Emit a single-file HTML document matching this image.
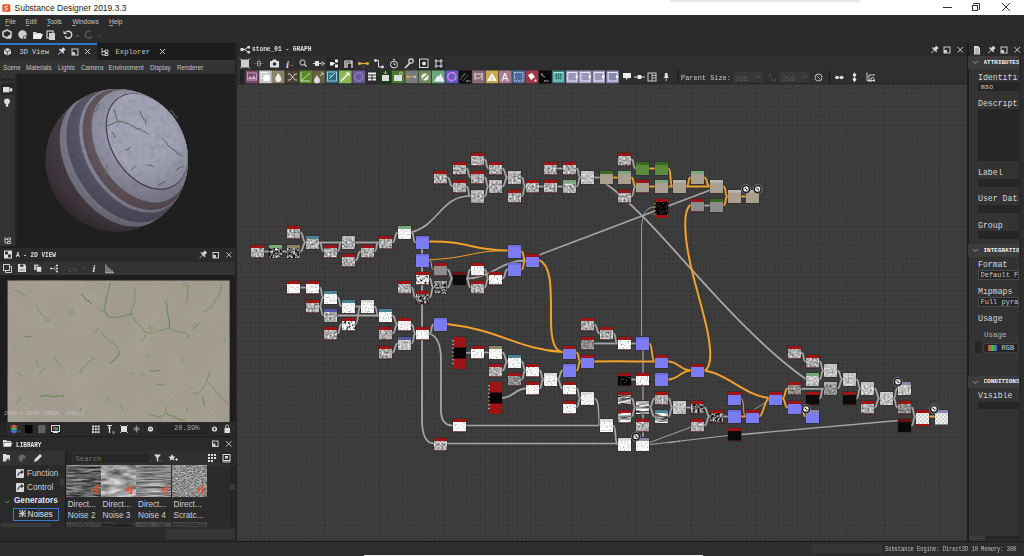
<!DOCTYPE html><html><head><meta charset="utf-8"><style>
html,body{margin:0;padding:0;width:1024px;height:556px;overflow:hidden;background:#2b2b2b;position:relative}
div{box-sizing:border-box}
svg{position:absolute;overflow:hidden}
</style></head><body>
<div style="position:absolute;left:0px;top:0px;width:1024px;height:15px;background:#ffffff;"></div>
<svg style="left:0;top:0" width="14" height="15"><path d="M6.3 2.5v11M1 8h11" stroke="#f4b8a0" stroke-width="0.5"/><rect x="2.3" y="4.3" width="8" height="7.4" rx="1.3" fill="#e8562c"/><path d="M7.8 6.3h-2.3a1 1 0 0 0 0 1.7h1.5a1 1 0 0 1 0 1.7h-2.3" stroke="#fff" stroke-width="0.9" fill="none"/></svg>
<div style="position:absolute;left:14.5px;top:3.6px;font-family:'Liberation Sans', sans-serif;font-size:8.5px;line-height:1;color:#1a1a1a;white-space:nowrap;">Substance Designer 2019.3.3</div>
<div style="position:absolute;left:943px;top:7px;width:9px;height:1px;background:#333;"></div>
<div style="position:absolute;left:971.6px;top:4.5px;width:6px;height:6px;border:1px solid #333"></div>
<svg style="left:971px;top:2px" width="10" height="10"><path d="M2.5 2.5V1.5h6v6H7.5" stroke="#333" stroke-width="1" fill="none"/></svg>
<svg style="left:1001px;top:2px" width="10" height="10"><path d="M1 1L9 9M9 1L1 9" stroke="#333" stroke-width="1"/></svg>
<div style="position:absolute;left:670px;top:0px;width:190px;height:1.5px;background:#e6e6e6;"></div>
<div style="position:absolute;left:0px;top:15px;width:1024px;height:28px;background:#2b2b2b;"></div>
<div style="position:absolute;left:5.3px;top:18.5px;font-family:'Liberation Sans', sans-serif;font-size:6.5px;line-height:1;color:#c8c8c8;white-space:nowrap;">File</div>
<div style="position:absolute;left:5.3px;top:25.3px;width:3.5px;height:0.6px;background:#999;"></div>
<div style="position:absolute;left:25.5px;top:18.5px;font-family:'Liberation Sans', sans-serif;font-size:6.5px;line-height:1;color:#c8c8c8;white-space:nowrap;">Edit</div>
<div style="position:absolute;left:25.5px;top:25.3px;width:3.5px;height:0.6px;background:#999;"></div>
<div style="position:absolute;left:46.7px;top:18.5px;font-family:'Liberation Sans', sans-serif;font-size:6.5px;line-height:1;color:#c8c8c8;white-space:nowrap;">Tools</div>
<div style="position:absolute;left:46.7px;top:25.3px;width:3.5px;height:0.6px;background:#999;"></div>
<div style="position:absolute;left:72.4px;top:18.5px;font-family:'Liberation Sans', sans-serif;font-size:6.5px;line-height:1;color:#c8c8c8;white-space:nowrap;">Windows</div>
<div style="position:absolute;left:72.4px;top:25.3px;width:3.5px;height:0.6px;background:#999;"></div>
<div style="position:absolute;left:109px;top:18.5px;font-family:'Liberation Sans', sans-serif;font-size:6.5px;line-height:1;color:#c8c8c8;white-space:nowrap;">Help</div>
<div style="position:absolute;left:109px;top:25.3px;width:3.5px;height:0.6px;background:#999;"></div>
<svg style="left:0;top:27px" width="110" height="15">
<g fill="#d0d0d0">
<path d="M7 3l4 2v4l-4 2l-4-2V5z" fill="none" stroke="#d0d0d0" stroke-width="1.6"/><circle cx="9.5" cy="10" r="2" />
<circle cx="22.5" cy="7.5" r="4.2"/><circle cx="25" cy="10.5" r="2" fill="#2b2b2b"/><circle cx="25" cy="10.5" r="1.3"/>
<path d="M33 5h3l1 1h4v6h-8z"/><path d="M34 7h9l-2 5h-8z" fill="#eee"/>
<rect x="47" y="4" width="6" height="7" fill="none" stroke="#d0d0d0" stroke-width="1.2"/><rect x="49" y="6" width="6" height="7"/>
</g>
<path d="M66 5a3.5 3.5 0 1 1 -1 4" fill="none" stroke="#d0d0d0" stroke-width="1.5"/><path d="M63.5 3.5v3.5h3.5z" fill="#d0d0d0"/>
<path d="M76 8l1.5 1.5l1.5-1.5" fill="none" stroke="#888" stroke-width="0.8"/>
<path d="M91 5a3.5 3.5 0 1 0 1 4" fill="none" stroke="#555" stroke-width="1.5"/>
<path d="M98 8l1.5 1.5l1.5-1.5" fill="none" stroke="#555" stroke-width="0.8"/>
</svg>
<div style="position:absolute;left:0px;top:42.5px;width:235px;height:17.5px;background:#1c1c1c;"></div>
<div style="position:absolute;left:0px;top:42.5px;width:97px;height:17.5px;background:#2c2c2c;"></div>
<div style="position:absolute;left:0px;top:42.5px;width:97px;height:2px;background:#2a78c8;"></div>
<svg style="left:0;top:44px" width="236" height="16">
<path d="M7.5 4l3.5 1.8v4l-3.5 1.8l-3.5-1.8v-4z" fill="#cfcfcf"/><path d="M4 5.8l3.5 1.8l3.5-1.8M7.5 7.6v4" stroke="#2c2c2c" stroke-width="0.7" fill="none"/>
<g transform="translate(61.5 7.3) rotate(45)" fill="#d8d8d8"><rect x="-1.6" y="-4.2" width="3.2" height="3.6"/><rect x="-3" y="-0.8" width="6" height="1.4"/><rect x="-0.4" y="0.5" width="0.8" height="4.2" fill="#aaa"/></g>
<rect x="72" y="5" width="6" height="6" fill="none" stroke="#ccc" stroke-width="1"/><rect x="72" y="8" width="3" height="3" fill="#ccc"/>
<path d="M85 5l5 5M90 5l-5 5" stroke="#ccc" stroke-width="1"/>
<path d="M102 4v7h4M102 7.5h4M105 6h3v2.5h-3zM105 9.5h3v2h-3z" stroke="#ccc" stroke-width="0.9" fill="none"/>
<path d="M160 5l5 5M165 5l-5 5" stroke="#ccc" stroke-width="1"/>
</svg>
<div style="position:absolute;left:19.5px;top:49.3px;font-family:'Liberation Mono', monospace;font-size:7px;line-height:1;color:#d8d8d8;white-space:nowrap;">3D View</div>
<div style="position:absolute;left:115.5px;top:49px;font-family:'Liberation Mono', monospace;font-size:7.2px;line-height:1;color:#c8c8c8;white-space:nowrap;">Explorer</div>
<div style="position:absolute;left:0px;top:60px;width:235px;height:14px;background:#333333;"></div>
<div style="position:absolute;left:3px;top:64.5px;font-family:'Liberation Sans', sans-serif;font-size:6.3px;line-height:1;color:#c0c4cc;white-space:nowrap;">Scene</div>
<div style="position:absolute;left:26px;top:64.5px;font-family:'Liberation Sans', sans-serif;font-size:6.3px;line-height:1;color:#c0c4cc;white-space:nowrap;">Materials</div>
<div style="position:absolute;left:58px;top:64.5px;font-family:'Liberation Sans', sans-serif;font-size:6.3px;line-height:1;color:#c0c4cc;white-space:nowrap;">Lights</div>
<div style="position:absolute;left:81px;top:64.5px;font-family:'Liberation Sans', sans-serif;font-size:6.3px;line-height:1;color:#c0c4cc;white-space:nowrap;">Camera</div>
<div style="position:absolute;left:108.5px;top:64.5px;font-family:'Liberation Sans', sans-serif;font-size:6.3px;line-height:1;color:#c0c4cc;white-space:nowrap;">Environment</div>
<div style="position:absolute;left:150px;top:64.5px;font-family:'Liberation Sans', sans-serif;font-size:6.3px;line-height:1;color:#c0c4cc;white-space:nowrap;">Display</div>
<div style="position:absolute;left:177px;top:64.5px;font-family:'Liberation Sans', sans-serif;font-size:6.3px;line-height:1;color:#c0c4cc;white-space:nowrap;">Renderer</div>
<div style="position:absolute;left:0px;top:74px;width:235px;height:174px;background:#1f1f1f;"></div>
<div style="position:absolute;left:0px;top:74px;width:15.3px;height:172px;background:#333333;"></div>
<div style="position:absolute;left:15.3px;top:74px;width:1.6px;height:172px;background:#262626;"></div>
<div style="position:absolute;left:1px;top:78.3px;width:13px;height:2.5px;background:#262626;"></div>
<div style="position:absolute;left:1px;top:83.3px;width:13px;height:12.2px;background:#262626;"></div>
<svg style="left:0;top:74px" width="16" height="174">
<rect x="3" y="13" width="6.5" height="5.4" fill="#ddd"/><path d="M9.5 15l2.7-1.6v4.6l-2.7-1.4z" fill="#ddd"/>
<circle cx="7" cy="27.3" r="2.9" fill="#ddd"/><rect x="5.8" y="29.5" width="2.4" height="3.2" fill="#ddd"/>
<path d="M5 163v6h3M5 165.5h3M7.5 164h3v2h-3zM7.5 167.5h3v2h-3z" stroke="#ccc" stroke-width="0.9" fill="none"/>
</svg>
<svg style="left:15px;top:74px" width="221" height="174" viewBox="15 74 221 174">
<defs>
<radialGradient id="shade" cx="0.66" cy="0.28" r="0.8">
<stop offset="0" stop-color="#fff" stop-opacity="0.06"/><stop offset="0.3" stop-color="#000" stop-opacity="0"/><stop offset="0.6" stop-color="#000" stop-opacity="0.18"/><stop offset="0.85" stop-color="#000" stop-opacity="0.34"/><stop offset="1" stop-color="#000" stop-opacity="0.55"/></radialGradient>
<filter id="sblur"><feGaussianBlur stdDeviation="0.35"/></filter><filter id="stex" x="0" y="0" width="1" height="1" color-interpolation-filters="sRGB"><feTurbulence type="fractalNoise" baseFrequency="0.18" numOctaves="3" seed="12"/><feColorMatrix type="matrix" values="0 0 0 0 0.2 0 0 0 0 0.2 0 0 0 0 0.25 2 0 0 0 -0.9"/><feComposite in2="SourceGraphic" operator="in"/></filter>
</defs><g filter="url(#sblur)"><circle cx="116.8" cy="160.3" r="71.2" fill="#5c5058"/><path d="M152.3,222.0 151.2,222.6 150.1,223.2 148.9,223.7 147.7,224.2 146.5,224.6 145.3,225.0 144.0,225.4 142.8,225.7 141.5,226.0 140.2,226.2 138.8,226.4 137.5,226.5 136.1,226.6 134.8,226.6 133.4,226.6 132.0,226.6 130.6,226.5 129.2,226.3 127.8,226.1 126.3,225.9 124.9,225.6 123.5,225.3 122.0,225.0 120.6,224.6 119.1,224.1 117.6,223.6 116.2,223.1 114.7,222.5 113.2,221.9 111.8,221.2 110.3,220.5 108.9,219.8 107.4,219.0 106.0,218.2 104.5,217.3 103.1,216.4 101.7,215.5 100.3,214.5 98.9,213.5 97.5,212.4 96.1,211.4 94.8,210.2 93.4,209.1 92.1,207.9 90.8,206.7 89.5,205.4 88.2,204.2 86.9,202.8 85.7,201.5 84.4,200.1 83.2,198.8 82.1,197.3 80.9,195.9 79.8,194.4 78.7,192.9 77.6,191.4 76.5,189.9 75.5,188.3 74.5,186.8 73.5,185.2 72.6,183.6 71.7,182.0 70.8,180.3 69.9,178.7 69.1,177.0 68.3,175.3 67.5,173.7 66.8,172.0 66.1,170.3 65.5,168.6 64.8,166.9 64.3,165.2 63.7,163.4 63.2,161.7 62.7,160.0 62.3,158.3 61.8,156.6 61.5,154.9 61.1,153.2 60.8,151.5 60.6,149.8 60.3,148.1 60.2,146.4 60.0,144.7 59.9,143.1 59.8,141.4 59.8,139.8 59.8,138.2 59.9,136.6 59.9,135.0 60.1,133.4 60.2,131.9 60.4,130.3 60.6,128.8 60.9,127.3 61.2,125.9 61.6,124.4 62.0,123.0 62.4,121.6 62.8,120.3 63.3,119.0 63.9,117.7 64.4,116.4 65.0,115.1 65.6,113.9 66.3,112.7 67.0,111.6 67.8,110.5 68.5,109.4 69.3,108.4 70.2,107.4 71.0,106.4 71.9,105.5 72.8,104.6 73.8,103.7 74.8,102.9 75.8,102.1 76.8,101.4 83.5,97.4 94.2,92.8 105.4,90.0 117.0,89.1 128.6,90.1 139.9,92.9 150.6,97.6 160.3,103.9 168.9,111.8 176.1,120.9 181.7,131.1 185.6,142.0 187.7,153.5 187.8,165.1 186.1,176.6 182.5,187.7 177.2,198.0 170.3,207.3 161.9,215.4 152.3,222.0Z" fill="#9898ac"/><path d="M163.5,214.1 162.5,214.9 161.5,215.7 160.5,216.4 159.4,217.1 158.3,217.7 157.2,218.3 156.1,218.9 154.9,219.4 153.7,219.9 152.5,220.3 151.3,220.7 150.1,221.1 148.8,221.4 147.5,221.7 146.2,221.9 144.9,222.1 143.6,222.2 142.2,222.3 140.9,222.3 139.5,222.3 138.1,222.3 136.7,222.2 135.3,222.0 133.9,221.8 132.5,221.6 131.1,221.3 129.6,221.0 128.2,220.7 126.7,220.3 125.3,219.8 123.8,219.3 122.4,218.8 120.9,218.2 119.5,217.6 118.0,217.0 116.6,216.3 115.1,215.5 113.7,214.7 112.3,213.9 110.8,213.1 109.4,212.2 108.0,211.2 106.6,210.3 105.2,209.3 103.8,208.2 102.5,207.1 101.1,206.0 99.8,204.9 98.5,203.7 97.1,202.5 95.9,201.3 94.6,200.0 93.3,198.7 92.1,197.4 90.9,196.0 89.7,194.6 88.5,193.2 87.4,191.8 86.2,190.3 85.1,188.8 84.1,187.3 83.0,185.8 82.0,184.3 81.0,182.7 80.0,181.1 79.1,179.5 78.2,177.9 77.3,176.3 76.4,174.7 75.6,173.0 74.8,171.4 74.1,169.7 73.4,168.0 72.7,166.3 72.0,164.6 71.4,162.9 70.8,161.2 70.3,159.5 69.7,157.8 69.3,156.1 68.8,154.4 68.4,152.7 68.0,151.0 67.7,149.3 67.4,147.6 67.1,145.9 66.9,144.3 66.7,142.6 66.6,140.9 66.5,139.3 66.4,137.6 66.4,136.0 66.4,134.4 66.4,132.8 66.5,131.2 66.6,129.7 66.8,128.2 67.0,126.6 67.2,125.1 67.5,123.7 67.8,122.2 68.1,120.8 68.5,119.4 68.9,118.0 69.4,116.6 69.9,115.3 70.4,114.0 71.0,112.8 71.6,111.5 72.2,110.3 72.9,109.1 73.6,108.0 74.3,106.9 75.0,105.8 75.8,104.8 76.7,103.8 77.5,102.8 78.4,101.9 79.3,101.0 80.3,100.2 81.3,99.4 82.3,98.6 83.3,97.9 84.4,97.2 85.4,96.5 86.5,95.9 87.7,95.3 88.8,94.8 95.2,92.4 105.2,90.1 115.4,89.1 125.6,89.6 135.7,91.6 145.3,95.1 154.4,99.8 162.7,105.8 170.0,113.0 176.2,121.1 181.2,130.0 184.9,139.6 187.2,149.6 188.0,159.8 187.3,170.0 185.2,180.0 181.7,189.6 176.8,198.6 170.7,206.8 163.5,214.1Z" fill="#666278"/><path d="M178.2,196.3 177.6,197.4 176.9,198.4 176.1,199.4 175.4,200.4 174.6,201.4 173.8,202.3 173.0,203.2 172.1,204.0 171.2,204.8 170.3,205.6 169.3,206.3 168.3,207.0 167.3,207.6 166.3,208.3 165.3,208.8 164.2,209.4 163.1,209.9 162.0,210.3 160.8,210.7 159.7,211.1 158.5,211.4 157.3,211.7 156.1,212.0 154.9,212.2 153.6,212.4 152.4,212.5 151.1,212.6 149.8,212.6 148.5,212.6 147.2,212.5 145.9,212.5 144.6,212.3 143.2,212.2 141.9,211.9 140.5,211.7 139.2,211.4 137.8,211.0 136.4,210.7 135.1,210.2 133.7,209.8 132.3,209.3 130.9,208.7 129.6,208.2 128.2,207.5 126.8,206.9 125.5,206.2 124.1,205.4 122.7,204.7 121.4,203.8 120.0,203.0 118.7,202.1 117.4,201.2 116.1,200.2 114.8,199.3 113.5,198.2 112.2,197.2 110.9,196.1 109.7,195.0 108.4,193.8 107.2,192.7 106.0,191.5 104.8,190.2 103.6,189.0 102.5,187.7 101.4,186.4 100.2,185.1 99.2,183.7 98.1,182.3 97.0,180.9 96.0,179.5 95.0,178.1 94.1,176.6 93.1,175.1 92.2,173.6 91.3,172.1 90.5,170.6 89.6,169.1 88.8,167.5 88.0,165.9 87.3,164.4 86.6,162.8 85.9,161.2 85.2,159.6 84.6,158.0 84.0,156.4 83.5,154.8 83.0,153.2 82.5,151.6 82.0,149.9 81.6,148.3 81.2,146.7 80.9,145.1 80.5,143.5 80.3,141.9 80.0,140.3 79.8,138.7 79.6,137.1 79.5,135.6 79.4,134.0 79.3,132.5 79.3,130.9 79.3,129.4 79.3,127.9 79.4,126.4 79.5,124.9 79.7,123.5 79.9,122.0 80.1,120.6 80.3,119.2 80.6,117.8 81.0,116.5 81.3,115.2 81.7,113.9 82.1,112.6 82.6,111.3 83.1,110.1 83.6,108.9 84.2,107.7 84.8,106.6 85.4,105.5 86.1,104.4 86.8,103.4 87.5,102.3 88.3,101.4 89.0,100.4 89.9,99.5 90.7,98.6 91.6,97.8 92.5,97.0 93.4,96.2 94.3,95.5 95.3,94.8 96.3,94.1 97.3,93.5 98.4,93.0 99.5,92.4 100.5,91.9 101.7,91.5 102.8,91.1 104.0,90.7 105.1,90.3 106.3,90.1 107.5,89.8 108.8,89.6 110.0,89.4 111.3,89.3 116.5,89.1 124.4,89.5 132.2,90.8 139.8,92.9 147.1,95.9 154.0,99.6 160.5,104.1 166.4,109.3 171.8,115.1 176.4,121.4 180.4,128.3 183.5,135.5 185.9,143.0 187.4,150.8 188.0,158.6 187.7,166.5 186.6,174.3 184.6,181.9 181.8,189.3 178.2,196.3Z" fill="#9a9aae"/><path d="M180.9,191.4 180.3,192.5 179.7,193.6 179.0,194.7 178.4,195.7 177.7,196.7 176.9,197.7 176.2,198.6 175.4,199.5 174.6,200.4 173.8,201.2 172.9,202.0 172.0,202.8 171.1,203.5 170.1,204.2 169.1,204.9 168.1,205.5 167.1,206.0 166.1,206.6 165.0,207.1 163.9,207.5 162.8,208.0 161.7,208.3 160.6,208.7 159.4,209.0 158.2,209.2 157.0,209.4 155.8,209.6 154.6,209.8 153.3,209.8 152.1,209.9 150.8,209.9 149.5,209.9 148.3,209.8 147.0,209.7 145.7,209.5 144.3,209.3 143.0,209.1 141.7,208.8 140.4,208.5 139.0,208.1 137.7,207.7 136.3,207.3 135.0,206.8 133.6,206.3 132.3,205.8 130.9,205.2 129.6,204.5 128.3,203.9 126.9,203.1 125.6,202.4 124.3,201.6 123.0,200.8 121.6,199.9 120.3,199.1 119.0,198.1 117.8,197.2 116.5,196.2 115.2,195.2 114.0,194.1 112.8,193.0 111.5,191.9 110.3,190.8 109.1,189.6 108.0,188.4 106.8,187.2 105.7,186.0 104.6,184.7 103.5,183.4 102.4,182.1 101.4,180.7 100.3,179.4 99.3,178.0 98.4,176.6 97.4,175.1 96.5,173.7 95.6,172.2 94.7,170.8 93.8,169.3 93.0,167.8 92.2,166.3 91.4,164.7 90.7,163.2 90.0,161.7 89.3,160.1 88.7,158.6 88.0,157.0 87.5,155.4 86.9,153.8 86.4,152.3 85.9,150.7 85.4,149.1 85.0,147.5 84.6,145.9 84.3,144.4 84.0,142.8 83.7,141.2 83.4,139.7 83.2,138.1 83.0,136.5 82.9,135.0 82.8,133.5 82.7,132.0 82.6,130.5 82.6,129.0 82.7,127.5 82.7,126.0 82.8,124.6 83.0,123.1 83.1,121.7 83.3,120.3 83.6,118.9 83.8,117.6 84.1,116.3 84.5,115.0 84.9,113.7 85.3,112.4 85.7,111.2 86.2,110.0 86.7,108.8 87.2,107.6 87.8,106.5 88.4,105.4 89.1,104.3 89.7,103.3 90.4,102.3 91.1,101.3 91.9,100.4 92.7,99.5 93.5,98.6 94.3,97.8 95.2,97.0 96.1,96.2 97.0,95.5 98.0,94.8 99.0,94.2 99.9,93.5 101.0,93.0 102.0,92.4 103.1,91.9 104.2,91.5 105.3,91.1 106.4,90.7 107.5,90.3 108.7,90.0 109.9,89.8 111.1,89.6 112.3,89.4 113.5,89.3 114.8,89.2 116.0,89.1 116.8,89.1 124.2,89.5 131.4,90.6 138.5,92.5 145.3,95.1 151.9,98.3 158.0,102.2 163.8,106.8 169.0,111.9 173.7,117.5 177.8,123.6 181.2,130.0 184.0,136.8 186.1,143.8 187.4,151.0 188.0,158.3 187.8,165.6 186.9,172.9 185.2,180.0 182.8,186.9Z" fill="#6c5c64"/><path d="M186.0,177.1 185.7,178.3 185.3,179.5 184.9,180.7 184.5,181.8 184.1,183.0 183.6,184.1 183.1,185.1 182.6,186.2 182.0,187.2 181.4,188.2 180.8,189.2 180.1,190.1 179.5,191.0 178.8,191.9 178.0,192.7 177.3,193.5 176.5,194.3 175.7,195.1 174.8,195.8 174.0,196.5 173.1,197.1 172.2,197.7 171.3,198.3 170.3,198.8 169.3,199.3 168.3,199.8 167.3,200.2 166.3,200.6 165.3,201.0 164.2,201.3 163.1,201.5 162.0,201.8 160.9,202.0 159.8,202.2 158.6,202.3 157.5,202.4 156.3,202.4 155.1,202.4 153.9,202.4 152.7,202.3 151.5,202.2 150.3,202.1 149.1,201.9 147.8,201.7 146.6,201.4 145.3,201.1 144.1,200.8 142.8,200.4 141.6,200.0 140.3,199.5 139.1,199.1 137.8,198.5 136.6,198.0 135.3,197.4 134.1,196.8 132.8,196.1 131.6,195.4 130.4,194.7 129.1,193.9 127.9,193.1 126.7,192.3 125.5,191.4 124.3,190.6 123.1,189.6 121.9,188.7 120.8,187.7 119.6,186.7 118.5,185.7 117.4,184.6 116.3,183.5 115.2,182.4 114.1,181.3 113.0,180.1 112.0,178.9 111.0,177.7 110.0,176.5 109.0,175.2 108.0,173.9 107.1,172.6 106.2,171.3 105.3,170.0 104.4,168.7 103.6,167.3 102.8,165.9 102.0,164.5 101.2,163.2 100.5,161.7 99.7,160.3 99.1,158.9 98.4,157.4 97.8,156.0 97.2,154.5 96.6,153.1 96.0,151.6 95.5,150.2 95.0,148.7 94.6,147.2 94.2,145.7 93.8,144.3 93.4,142.8 93.1,141.3 92.8,139.8 92.5,138.4 92.3,136.9 92.1,135.5 91.9,134.0 91.8,132.6 91.7,131.2 91.6,129.8 91.5,128.4 91.5,127.0 91.6,125.6 91.6,124.2 91.7,122.9 91.8,121.5 92.0,120.2 92.2,118.9 92.4,117.6 92.7,116.4 92.9,115.1 93.3,113.9 93.6,112.7 94.0,111.5 94.4,110.4 94.9,109.3 95.3,108.2 95.8,107.1 96.4,106.0 96.9,105.0 97.5,104.0 98.1,103.0 98.8,102.1 99.5,101.2 100.2,100.3 100.9,99.5 101.7,98.7 102.5,97.9 103.3,97.2 104.1,96.4 105.0,95.8 105.8,95.1 106.8,94.5 107.7,93.9 108.6,93.4 109.6,92.9 110.6,92.4 111.6,92.0 112.6,91.6 113.7,91.3 114.8,91.0 115.8,90.7 116.9,90.4 118.0,90.2 119.2,90.1 120.3,90.0 121.5,89.9 122.6,89.8 123.8,89.8 125.0,89.8 126.2,89.9 127.4,90.0 128.7,90.2 129.9,90.3 131.1,90.6 131.9,90.7 137.5,92.2 143.0,94.1 148.2,96.4 153.3,99.2 158.2,102.3 162.7,105.9 167.0,109.8 170.9,114.0 174.5,118.5 177.7,123.3 180.5,128.4 182.8,133.7 184.8,139.1 186.3,144.7 187.3,150.3 187.9,156.1 188.0,161.9 187.6,167.6 186.8,173.3Z" fill="#9494a8"/><path d="M187.0,148.2 187.2,149.4 187.3,150.7 187.5,151.9 187.6,153.1 187.7,154.4 187.8,155.6 187.8,156.8 187.8,158.0 187.8,159.2 187.7,160.3 187.6,161.5 187.5,162.6 187.4,163.8 187.2,164.9 187.0,166.0 186.8,167.0 186.6,168.1 186.3,169.2 186.0,170.2 185.7,171.2 185.3,172.2 184.9,173.1 184.5,174.1 184.1,175.0 183.6,175.9 183.2,176.8 182.7,177.6 182.1,178.4 181.6,179.3 181.0,180.0 180.4,180.8 179.8,181.5 179.1,182.2 178.4,182.9 177.7,183.5 177.0,184.1 176.3,184.7 175.5,185.2 174.8,185.8 174.0,186.2 173.1,186.7 172.3,187.1 171.5,187.5 170.6,187.9 169.7,188.2 168.8,188.5 167.9,188.8 167.0,189.0 166.0,189.2 165.1,189.4 164.1,189.6 163.1,189.7 162.1,189.7 161.1,189.8 160.1,189.8 159.1,189.8 158.1,189.7 157.0,189.6 156.0,189.5 154.9,189.3 153.9,189.1 152.8,188.9 151.8,188.7 150.7,188.4 149.6,188.1 148.6,187.7 147.5,187.3 146.4,186.9 145.3,186.5 144.3,186.0 143.2,185.5 142.1,185.0 141.1,184.4 140.0,183.8 138.9,183.2 137.9,182.5 136.8,181.8 135.8,181.1 134.8,180.4 133.7,179.6 132.7,178.8 131.7,178.0 130.7,177.2 129.7,176.3 128.8,175.4 127.8,174.5 126.9,173.6 125.9,172.6 125.0,171.7 124.1,170.7 123.2,169.6 122.3,168.6 121.5,167.6 120.6,166.5 119.8,165.4 119.0,164.3 118.2,163.2 117.5,162.0 116.7,160.9 116.0,159.7 115.3,158.5 114.6,157.4 114.0,156.2 113.3,154.9 112.7,153.7 112.1,152.5 111.6,151.3 111.0,150.0 110.5,148.8 110.0,147.5 109.5,146.3 109.1,145.0 108.7,143.8 108.3,142.5 107.9,141.2 107.6,140.0 107.3,138.7 107.0,137.5 106.7,136.2 106.5,134.9 106.3,133.7 106.1,132.5 106.0,131.2 105.9,130.0 105.8,128.8 105.7,127.6 105.7,126.4 105.7,125.2 105.7,124.0 105.8,122.8 105.8,121.7 105.9,120.5 106.1,119.4 106.2,118.3 106.4,117.2 106.6,116.1 106.9,115.0 107.2,114.0 107.5,113.0 107.8,111.9 108.1,111.0 108.5,110.0 108.9,109.1 109.4,108.1 109.8,107.2 110.3,106.4 110.8,105.5 111.3,104.7 111.9,103.9 112.5,103.1 113.1,102.4 113.7,101.6 114.4,100.9 115.0,100.3 115.7,99.6 116.4,99.0 117.2,98.4 117.9,97.9 118.7,97.4 119.5,96.9 120.3,96.4 121.2,96.0 122.0,95.6 122.9,95.2 123.8,94.9 124.7,94.6 125.6,94.3 126.5,94.1 127.4,93.9 128.4,93.7 129.4,93.6 130.3,93.5 131.3,93.4 132.3,93.3 133.3,93.3 134.4,93.4 135.4,93.4 136.4,93.5 137.5,93.6 138.5,93.8 139.6,94.0 140.6,94.2 141.7,94.5 142.8,94.7 143.8,95.1 144.9,95.4 146.0,95.8 147.1,96.2 148.1,96.7 149.2,97.1 150.3,97.6 151.4,98.2 152.4,98.7 153.5,99.3 154.5,100.0 155.6,100.6 156.6,101.3 157.7,102.0 158.4,102.5 160.6,104.2 162.8,106.0 164.9,107.8 166.9,109.7 168.9,111.8 170.8,113.9 172.6,116.0 174.3,118.3 175.9,120.6 177.4,122.9 178.8,125.3 180.2,127.8 181.4,130.3 182.5,132.9 183.6,135.5 184.5,138.2 185.3,140.9 186.0,143.6 186.6,146.3Z" fill="#4a3e48"/><path d="M186.2,144.4 186.5,145.7 186.7,146.9 186.9,148.1 187.1,149.4 187.3,150.6 187.4,151.8 187.5,153.0 187.6,154.2 187.7,155.4 187.7,156.6 187.7,157.7 187.6,158.9 187.6,160.0 187.5,161.2 187.4,162.3 187.2,163.4 187.1,164.5 186.9,165.6 186.7,166.6 186.4,167.7 186.1,168.7 185.8,169.7 185.5,170.7 185.1,171.6 184.8,172.6 184.3,173.5 183.9,174.4 183.5,175.3 183.0,176.1 182.5,177.0 181.9,177.8 181.4,178.5 180.8,179.3 180.2,180.0 179.6,180.7 178.9,181.4 178.3,182.0 177.6,182.7 176.9,183.3 176.1,183.8 175.4,184.3 174.6,184.8 173.8,185.3 173.0,185.8 172.2,186.2 171.3,186.6 170.5,186.9 169.6,187.2 168.7,187.5 167.8,187.8 166.9,188.0 166.0,188.2 165.0,188.3 164.1,188.5 163.1,188.6 162.1,188.6 161.1,188.7 160.1,188.7 159.1,188.6 158.1,188.5 157.1,188.4 156.1,188.3 155.0,188.2 154.0,188.0 152.9,187.7 151.9,187.5 150.8,187.2 149.8,186.8 148.7,186.5 147.7,186.1 146.6,185.7 145.6,185.2 144.5,184.8 143.5,184.3 142.4,183.7 141.4,183.1 140.3,182.6 139.3,181.9 138.2,181.3 137.2,180.6 136.2,179.9 135.2,179.2 134.2,178.4 133.2,177.6 132.2,176.8 131.2,176.0 130.3,175.1 129.3,174.2 128.4,173.3 127.4,172.4 126.5,171.5 125.6,170.5 124.7,169.5 123.9,168.5 123.0,167.5 122.2,166.4 121.4,165.4 120.6,164.3 119.8,163.2 119.0,162.1 118.3,161.0 117.5,159.8 116.8,158.7 116.2,157.5 115.5,156.4 114.8,155.2 114.2,154.0 113.6,152.8 113.1,151.6 112.5,150.4 112.0,149.1 111.5,147.9 111.0,146.7 110.6,145.4 110.1,144.2 109.7,143.0 109.4,141.7 109.0,140.5 108.7,139.2 108.4,138.0 108.1,136.8 107.9,135.5 107.7,134.3 107.5,133.1 107.3,131.8 107.2,130.6 107.1,129.4 107.0,128.2 106.9,127.0 106.9,125.9 106.9,124.7 106.9,123.5 107.0,122.4 107.1,121.2 107.2,120.1 107.3,119.0 107.5,117.9 107.7,116.9 107.9,115.8 108.2,114.8 108.5,113.7 108.8,112.7 109.1,111.8 109.5,110.8 109.8,109.8 110.2,108.9 110.7,108.0 111.1,107.2 111.6,106.3 112.1,105.5 112.7,104.7 113.2,103.9 113.8,103.1 114.4,102.4 115.0,101.7 115.7,101.0 116.3,100.4 117.0,99.8 117.7,99.2 118.5,98.6 119.2,98.1 120.0,97.6 120.8,97.1 121.6,96.7 122.4,96.3 123.3,95.9 124.1,95.5 125.0,95.2 125.9,94.9 126.8,94.7 127.7,94.4 128.6,94.2 129.6,94.1 130.5,94.0 131.5,93.9 132.5,93.8 133.5,93.8 134.5,93.8 135.5,93.8 136.5,93.9 137.5,94.0 138.5,94.1 139.6,94.3 140.6,94.5 141.6,94.7 142.7,95.0 143.7,95.3 144.8,95.6 145.9,95.9 146.9,96.3 148.0,96.7 149.0,97.2 150.1,97.7 151.1,98.2 152.2,98.7 153.2,99.3 154.3,99.9 155.3,100.5 156.4,101.2 157.4,101.8 158.4,102.5 159.4,103.3 160.4,104.0 161.4,104.8 162.7,105.8 164.5,107.4 166.3,109.1 168.0,110.8 169.6,112.6 171.2,114.4 172.7,116.3 174.2,118.2 175.6,120.2 176.9,122.2 178.2,124.3 179.4,126.4 180.5,128.5 181.6,130.7 182.5,132.9 183.4,135.2 184.2,137.4 185.0,139.8 185.6,142.1 186.2,144.4Z" fill="#a2a4b6"/></g>
<circle cx="116.8" cy="160.3" r="71.2" fill="url(#shade)"/>
<polyline points="114.4,109.0 115.2,112.2 115.9,115.5 116.8,118.7 118.3,121.7 114.8,122.4 111.9,124.2 108.6,125.3 105.8,127.4" fill="none" stroke="#8aa08a" stroke-width="1.8" opacity="0.3"/><polyline points="114.4,109.0 115.2,112.2 115.9,115.5 116.8,118.7 118.3,121.7 114.8,122.4 111.9,124.2 108.6,125.3 105.8,127.4" fill="none" stroke="#44584a" stroke-width="0.9" opacity="0.85"/><polyline points="118.3,121.7 122.0,121.5 125.3,122.9 128.8,123.6 131.2,125.8 134.2,126.8 136.7,128.7 140.1,128.9 142.5,131.0 145.5,132.1 148.0,134.0" fill="none" stroke="#8aa08a" stroke-width="1.8" opacity="0.3"/><polyline points="118.3,121.7 122.0,121.5 125.3,122.9 128.8,123.6 131.2,125.8 134.2,126.8 136.7,128.7 140.1,128.9 142.5,131.0 145.5,132.1 148.0,134.0" fill="none" stroke="#44584a" stroke-width="0.9" opacity="0.85"/><polyline points="140.0,111.0 141.4,114.4 142.9,117.8 145.3,120.8 146.0,124.5" fill="none" stroke="#8aa08a" stroke-width="1.8" opacity="0.3"/><polyline points="140.0,111.0 141.4,114.4 142.9,117.8 145.3,120.8 146.0,124.5" fill="none" stroke="#44584a" stroke-width="0.9" opacity="0.85"/><polyline points="161.5,138.0 164.2,139.9 166.4,142.3 167.9,145.4 170.4,147.5 173.0,149.5 175.8,150.9 177.5,153.7 180.7,154.6 182.7,157.0" fill="none" stroke="#8aa08a" stroke-width="1.8" opacity="0.3"/><polyline points="161.5,138.0 164.2,139.9 166.4,142.3 167.9,145.4 170.4,147.5 173.0,149.5 175.8,150.9 177.5,153.7 180.7,154.6 182.7,157.0" fill="none" stroke="#44584a" stroke-width="0.9" opacity="0.85"/><polyline points="136.5,165.0 133.5,167.7 130.8,170.7" fill="none" stroke="#8aa08a" stroke-width="1.8" opacity="0.3"/><polyline points="136.5,165.0 133.5,167.7 130.8,170.7" fill="none" stroke="#44584a" stroke-width="0.9" opacity="0.85"/><polyline points="148.0,165.0 151.2,165.4 154.0,167.0" fill="none" stroke="#8aa08a" stroke-width="1.8" opacity="0.3"/><polyline points="148.0,165.0 151.2,165.4 154.0,167.0" fill="none" stroke="#44584a" stroke-width="0.9" opacity="0.85"/><polyline points="111.5,132.0 114.0,134.5 115.0,138.0" fill="none" stroke="#8aa08a" stroke-width="1.8" opacity="0.3"/><polyline points="111.5,132.0 114.0,134.5 115.0,138.0" fill="none" stroke="#44584a" stroke-width="0.9" opacity="0.85"/><polyline points="107.7,165.0 105.8,168.5 105.7,172.5 104.0,176.0" fill="none" stroke="#8aa08a" stroke-width="1.8" opacity="0.3"/><polyline points="107.7,165.0 105.8,168.5 105.7,172.5 104.0,176.0" fill="none" stroke="#44584a" stroke-width="0.9" opacity="0.85"/><polyline points="170.0,110.0 173.0,112.3 174.7,115.9 178.0,118.0" fill="none" stroke="#8aa08a" stroke-width="1.8" opacity="0.3"/><polyline points="170.0,110.0 173.0,112.3 174.7,115.9 178.0,118.0" fill="none" stroke="#44584a" stroke-width="0.9" opacity="0.85"/><polyline points="125.0,150.0 128.3,149.1 131.0,147.0" fill="none" stroke="#8aa08a" stroke-width="1.8" opacity="0.3"/><polyline points="125.0,150.0 128.3,149.1 131.0,147.0" fill="none" stroke="#44584a" stroke-width="0.9" opacity="0.85"/><polyline points="176.0,170.0 179.8,167.7 184.0,166.0" fill="none" stroke="#8aa08a" stroke-width="1.8" opacity="0.3"/><polyline points="176.0,170.0 179.8,167.7 184.0,166.0" fill="none" stroke="#44584a" stroke-width="0.9" opacity="0.85"/><polyline points="95.0,112.0 97.7,108.4 99.0,104.0" fill="none" stroke="#8aa08a" stroke-width="1.8" opacity="0.3"/><polyline points="95.0,112.0 97.7,108.4 99.0,104.0" fill="none" stroke="#44584a" stroke-width="0.9" opacity="0.85"/><polyline points="158.0,185.0 162.0,183.1 166.0,181.0" fill="none" stroke="#8aa08a" stroke-width="1.8" opacity="0.3"/><polyline points="158.0,185.0 162.0,183.1 166.0,181.0" fill="none" stroke="#44584a" stroke-width="0.9" opacity="0.85"/><polyline points="80.0,150.0 82.8,153.2 86.0,156.0" fill="none" stroke="#8aa08a" stroke-width="1.8" opacity="0.3"/><polyline points="80.0,150.0 82.8,153.2 86.0,156.0" fill="none" stroke="#44584a" stroke-width="0.9" opacity="0.85"/><polyline points="70.0,175.0 73.0,176.6 74.9,179.6 78.0,181.0" fill="none" stroke="#8aa08a" stroke-width="1.8" opacity="0.3"/><polyline points="70.0,175.0 73.0,176.6 74.9,179.6 78.0,181.0" fill="none" stroke="#44584a" stroke-width="0.9" opacity="0.85"/>
<circle cx="116.8" cy="160.3" r="71.2" filter="url(#stex)" opacity="0.15"/>
</svg>
<div style="position:absolute;left:0px;top:248px;width:235px;height:13.5px;background:#2a2a2a;"></div>
<div style="position:absolute;left:0px;top:261.5px;width:235px;height:13.2px;background:#333333;"></div>
<div style="position:absolute;left:0px;top:274.7px;width:235px;height:147.6px;background:#1e1e1e;"></div>
<svg style="left:0;top:248px" width="236" height="27">
<rect x="4" y="2.5" width="8" height="8" fill="#ddd"/><rect x="5" y="3.5" width="3" height="3" fill="#333"/><rect x="8" y="6.5" width="3" height="3" fill="#333"/>
<g transform="translate(203 6.6) rotate(45)" fill="#d8d8d8"><rect x="-1.6" y="-4.2" width="3.2" height="3.6"/><rect x="-3" y="-0.8" width="6" height="1.4"/><rect x="-0.4" y="0.5" width="0.8" height="4.2" fill="#aaa"/></g>
<rect x="213" y="4.5" width="5.5" height="5.5" fill="none" stroke="#ccc" stroke-width="1"/><rect x="213" y="7" width="3" height="3" fill="#ccc"/>
<path d="M226.3 4.3l5 5M231.3 4.3l-5 5" stroke="#ccc" stroke-width="0.9"/>
<g transform="translate(0,14)">
<rect x="3.5" y="2.5" width="6" height="6" fill="none" stroke="#ccc" stroke-width="1"/><path d="M9.5 4.5h2v6h-6v-2" fill="none" stroke="#ccc" stroke-width="1"/>
<path d="M18 2h6.5l1.5 1.5v6.5h-8z" fill="#ddd"/><rect x="20" y="2.5" width="3.5" height="2.2" fill="#333"/><rect x="19.5" y="7" width="5" height="2" fill="#aaa"/>
<rect x="34" y="2.5" width="4.5" height="5.5" fill="#bbb"/><rect x="36.5" y="4.5" width="5" height="5.5" fill="#ddd" stroke="#333" stroke-width="0.5"/>
<path d="M51 6.5h3M54 6.5l3-3M54 6.5l3 3" stroke="#ccc" stroke-width="0.8"/><circle cx="57" cy="3.5" r="1.1" fill="#ccc"/><circle cx="57" cy="9.5" r="1.1" fill="#ccc"/><circle cx="51" cy="6.5" r="1.1" fill="#ccc"/><rect x="56" y="5.7" width="2" height="1.6" fill="#ccc"/>
<text x="68" y="9.5" font-family="Liberation Serif" font-size="7" fill="#5a5a5a">UV</text><path d="M83.5 5.5l1.2 1.2l1.2-1.2" stroke="#666" stroke-width="0.7" fill="none"/>
<text x="92.5" y="10" font-family="Liberation Serif" font-style="italic" font-weight="bold" font-size="10" fill="#ddd">i</text>
<path d="M106 10.5V2.5M108 10.5V5M110 10.5V6.5M112 10.5V8M105 10.8h9" stroke="#ccc" stroke-width="0.9"/>
</g></svg>
<div style="position:absolute;left:15.8px;top:252.2px;font-family:'Liberation Mono', monospace;font-size:6.8px;line-height:1;color:#e0e0e0;white-space:nowrap;transform:scaleX(0.891);transform-origin:0 0;font-weight:bold;">A - 2D VIEW</div>
<svg style="left:0;top:0" width="236" height="430" viewBox="0 0 236 430">
<defs><filter id="tex" x="0" y="0" width="1" height="1" color-interpolation-filters="sRGB"><feTurbulence type="fractalNoise" baseFrequency="0.7" numOctaves="2" seed="4"/><feColorMatrix type="matrix" values="0 0 0 0 0.4 0 0 0 0 0.38 0 0 0 0 0.34 1.2 0 0 0 -0.6"/></filter>
<filter id="tex2" x="0" y="0" width="1" height="1" color-interpolation-filters="sRGB"><feTurbulence type="fractalNoise" baseFrequency="0.03" numOctaves="2" seed="9"/><feColorMatrix type="matrix" values="0 0 0 0 0.75 0 0 0 0 0.72 0 0 0 0 0.66 0.8 0 0 0 -0.35"/></filter></defs>
<rect x="7.6" y="280.5" width="222" height="141.8" fill="#a39d91"/>
<rect x="7.6" y="280.5" width="222" height="141.8" filter="url(#tex)" opacity="0.3"/>
<rect x="7.6" y="280.5" width="222" height="141.8" filter="url(#tex2)" opacity="0.5"/>
<circle cx="71.7" cy="312.3" r="3" fill="#80966c" opacity="0.45"/><circle cx="47.1" cy="320.1" r="3" fill="#80966c" opacity="0.45"/><circle cx="71.7" cy="302.6" r="1.5" fill="#80966c" opacity="0.45"/><circle cx="56.2" cy="300.7" r="1.5" fill="#80966c" opacity="0.45"/><circle cx="151.3" cy="327.9" r="3" fill="#80966c" opacity="0.45"/><circle cx="185" cy="285" r="3" fill="#80966c" opacity="0.45"/><circle cx="195.3" cy="325.3" r="2.5" fill="#80966c" opacity="0.45"/><circle cx="225" cy="339.6" r="2" fill="#80966c" opacity="0.45"/><circle cx="107.9" cy="399.2" r="2.5" fill="#80966c" opacity="0.45"/><circle cx="131.8" cy="373.3" r="2.2" fill="#80966c" opacity="0.45"/><circle cx="142.2" cy="374.6" r="2.2" fill="#80966c" opacity="0.45"/><circle cx="147.4" cy="355.2" r="2" fill="#80966c" opacity="0.45"/><circle cx="182.4" cy="360.4" r="2" fill="#80966c" opacity="0.45"/><circle cx="14.8" cy="347.3" r="1.5" fill="#80966c" opacity="0.45"/><polyline points="14.8,289.7 18.3,291.6 21.6,293.7 25.1,295.5" fill="none" stroke="#5e8a4c" stroke-width="0.9" stroke-linejoin="round" opacity="0.85"/><polyline points="81.4,294.2 83.9,296.6 85.8,299.5 89.1,301.1 91.1,303.9" fill="none" stroke="#5e8a4c" stroke-width="1.1" stroke-linejoin="round" opacity="0.85"/><polyline points="110.5,282.6 109.6,286.2 108.4,289.6 108.1,293.4 106.6,296.8 105.8,300.7 105.5,304.7 104.0,308.5 105.9,312.4 108.0,316.2 111.3,317.3 114.8,317.3 118.3,317.5 121.6,316.7 124.7,315.4 128.0,314.6 131.2,313.7" fill="none" stroke="#5e8a4c" stroke-width="1.1" stroke-linejoin="round" opacity="0.85"/><polyline points="97.6,308.5 100.7,310.4 104.0,312.0" fill="none" stroke="#5e8a4c" stroke-width="0.8" stroke-linejoin="round" opacity="0.85"/><polyline points="36.8,307.8 38.9,310.7 40.8,313.7 44.2,315.6 45.8,318.8" fill="none" stroke="#5e8a4c" stroke-width="0.8" stroke-linejoin="round" opacity="0.85"/><polyline points="100.1,326.6 97.9,329.5 95.0,331.7" fill="none" stroke="#5e8a4c" stroke-width="0.8" stroke-linejoin="round" opacity="0.85"/><polyline points="100.0,330.5 101.9,332.9 103.6,335.3 106.2,337.0 108.0,339.5 110.5,341.9 113.5,343.6 116.0,346.0 118.3,348.6" fill="none" stroke="#5e8a4c" stroke-width="0.9" stroke-linejoin="round" opacity="0.85"/><polyline points="23.8,336.3 27.7,336.6 31.6,337.0" fill="none" stroke="#5e8a4c" stroke-width="1.1" stroke-linejoin="round" opacity="0.85"/><polyline points="134.4,289.1 135.4,292.5 134.6,296.0 135.1,299.4 134.3,303.0 133.1,306.5 131.4,309.9 131.2,313.7" fill="none" stroke="#5e8a4c" stroke-width="0.8" stroke-linejoin="round" opacity="0.85"/><polyline points="131.2,313.7 132.4,316.5 134.5,318.7 135.7,321.5 138.3,323.8 140.5,326.4 143.1,328.7 144.8,331.8 150.0,333.1 154.0,332.6 157.7,331.2 160.6,330.2 163.7,330.2 166.4,328.5 169.4,327.9 172.6,330.0 176.1,331.1 179.8,331.8 183.9,332.2 187.5,334.4 188.8,339.6" fill="none" stroke="#5e8a4c" stroke-width="0.8" stroke-linejoin="round" opacity="0.85"/><polyline points="166.8,300.7 166.0,303.7 167.6,306.8 166.8,309.8 167.9,313.7 168.2,317.7 169.4,321.5 169.5,324.7 169.4,327.9" fill="none" stroke="#5e8a4c" stroke-width="1.1" stroke-linejoin="round" opacity="0.85"/><polyline points="188.8,285.2 188.1,288.2 187.4,291.1 187.5,294.2 187.3,297.3 187.0,300.4 185.6,303.3" fill="none" stroke="#5e8a4c" stroke-width="0.9" stroke-linejoin="round" opacity="0.85"/><polyline points="221.2,283.9 221.6,287.1 220.5,290.0 219.9,293.0 217.3,298.1 214.7,301.0 213.4,304.6 211.3,307.3 208.0,308.6 205.7,311.1 203.1,312.4" fill="none" stroke="#5e8a4c" stroke-width="0.8" stroke-linejoin="round" opacity="0.85"/><polyline points="146.1,334.4 144.1,338.1 140.9,340.9" fill="none" stroke="#5e8a4c" stroke-width="0.9" stroke-linejoin="round" opacity="0.85"/><polyline points="200.5,321.5 198.3,324.7 195.2,327.0 192.7,329.9" fill="none" stroke="#5e8a4c" stroke-width="0.9" stroke-linejoin="round" opacity="0.85"/><polyline points="53.6,356.5 55.8,359.1 57.4,362.2 60.0,364.5 62.6,366.8" fill="none" stroke="#5e8a4c" stroke-width="0.9" stroke-linejoin="round" opacity="0.85"/><polyline points="36.8,360.3 37.1,363.6 38.0,366.8" fill="none" stroke="#5e8a4c" stroke-width="0.8" stroke-linejoin="round" opacity="0.85"/><polyline points="45.8,366.8 43.8,369.5 40.8,371.4 39.3,374.6" fill="none" stroke="#5e8a4c" stroke-width="0.8" stroke-linejoin="round" opacity="0.85"/><polyline points="17.3,372.0 21.2,375.9" fill="none" stroke="#5e8a4c" stroke-width="0.9" stroke-linejoin="round" opacity="0.85"/><polyline points="95.0,357.8 92.0,359.4 89.3,361.4 87.2,364.2 84.8,366.4 82.1,368.1 81.1,371.6 78.2,373.3" fill="none" stroke="#5e8a4c" stroke-width="0.8" stroke-linejoin="round" opacity="0.85"/><polyline points="117.0,356.5 115.0,359.2 112.2,361.2 110.5,364.2" fill="none" stroke="#5e8a4c" stroke-width="1.1" stroke-linejoin="round" opacity="0.85"/><polyline points="39.3,395.9 42.5,396.2 45.7,395.4 48.9,395.7 52.0,396.5 56.0,396.4 59.9,395.7 63.9,396.6" fill="none" stroke="#5e8a4c" stroke-width="1.1" stroke-linejoin="round" opacity="0.85"/><polyline points="19.9,397.9 18.2,401.3 16.0,404.3" fill="none" stroke="#5e8a4c" stroke-width="0.9" stroke-linejoin="round" opacity="0.85"/><polyline points="80.7,408.2 80.3,411.5 79.4,414.7" fill="none" stroke="#5e8a4c" stroke-width="0.8" stroke-linejoin="round" opacity="0.85"/><polyline points="209.6,372.0 209.4,375.2 207.7,378.0 207.0,381.1 205.4,384.6 203.1,387.6 200.4,390.7 197.9,394.0 192.7,392.7" fill="none" stroke="#5e8a4c" stroke-width="0.9" stroke-linejoin="round" opacity="0.85"/><polyline points="208.3,382.4 210.7,385.6 213.9,388.0 216.0,391.5 218.5,394.6 220.7,397.9 223.8,400.5 229.0,403.1" fill="none" stroke="#5e8a4c" stroke-width="0.8" stroke-linejoin="round" opacity="0.85"/><polyline points="166.8,405.7 165.8,409.5 166.2,413.5 163.6,415.3 160.8,416.7 157.7,417.4 154.9,415.8 151.9,415.1 148.7,414.8" fill="none" stroke="#5e8a4c" stroke-width="0.8" stroke-linejoin="round" opacity="0.85"/><polyline points="166.2,413.5 168.8,415.2 172.1,415.5 174.6,417.4 178.0,418.7 181.5,419.6 185.0,420.6" fill="none" stroke="#5e8a4c" stroke-width="1.1" stroke-linejoin="round" opacity="0.85"/><polyline points="156.5,383.7 159.4,384.9 162.4,385.2 165.5,385.0" fill="none" stroke="#5e8a4c" stroke-width="1.1" stroke-linejoin="round" opacity="0.85"/><polyline points="120.2,404.4 122.2,407.4 122.8,410.9" fill="none" stroke="#5e8a4c" stroke-width="0.8" stroke-linejoin="round" opacity="0.85"/><polyline points="186.2,407.0 187.5,412.0" fill="none" stroke="#5e8a4c" stroke-width="0.8" stroke-linejoin="round" opacity="0.85"/><polyline points="118.9,350.0 118.9,354.0 117.6,357.8" fill="none" stroke="#5e8a4c" stroke-width="1.1" stroke-linejoin="round" opacity="0.85"/><polyline points="150.0,370.7 153.4,371.5 156.9,370.2 160.3,370.7" fill="none" stroke="#5e8a4c" stroke-width="1.1" stroke-linejoin="round" opacity="0.85"/><polyline points="201.8,396.6 202.9,399.6 203.7,402.6 204.4,405.7" fill="none" stroke="#5e8a4c" stroke-width="1.1" stroke-linejoin="round" opacity="0.85"/>
</svg>
<div style="position:absolute;left:4.4px;top:411px;font-family:'Liberation Mono', monospace;font-size:6.2px;line-height:1;color:#d0d0d0;white-space:nowrap;transform:scaleX(0.871);transform-origin:0 0;opacity:0.7">2048 x 2048 (RGBA, 16bpc)</div>
<div style="position:absolute;left:0px;top:422.3px;width:235px;height:14px;background:#2b2b2b;"></div>
<div style="position:absolute;left:0px;top:422.3px;width:6px;height:14px;background:#262626;"></div>
<svg style="left:0;top:422px" width="236" height="15">
<path d="M14 2.5l4 2l-4 2l-4-2z" fill="#e05050"/><path d="M14 5l4 2l-4 2l-4-2z" fill="#40b040"/><path d="M14 7.5l4 2l-4 2l-4-2z" fill="#3a70d8"/>
<path d="M18.5 8.5l1 1l1-1" stroke="#aaa" stroke-width="0.6" fill="none"/>
<rect x="25" y="3" width="7.5" height="8" fill="#000"/>
<rect x="38" y="3" width="7.5" height="8" fill="#555"/><path d="M39.8 3v8M41.8 3v8M43.8 3v8" stroke="#777" stroke-width="0.8"/>
<rect x="50" y="1.5" width="11" height="11" fill="#222"/><rect x="51.5" y="3.5" width="8" height="6" fill="none" stroke="#ddd" stroke-width="1"/><circle cx="54.5" cy="6" r="1.6" fill="#e04040"/><circle cx="56.5" cy="6.8" r="1.6" fill="#40c040"/><circle cx="55.3" cy="7.6" r="1.3" fill="#4060e0"/><rect x="53" y="10" width="5" height="1" fill="#ddd"/>
<g fill="#ddd"><rect x="92" y="3.5" width="2" height="2"/><rect x="94.8" y="3.5" width="2" height="2"/><rect x="97.6" y="3.5" width="2" height="2"/><rect x="92" y="6.3" width="2" height="2"/><rect x="94.8" y="6.3" width="2" height="2"/><rect x="97.6" y="6.3" width="2" height="2"/><rect x="92" y="9.1" width="2" height="2"/><rect x="94.8" y="9.1" width="2" height="2"/><rect x="97.6" y="9.1" width="2" height="2"/></g>
<path d="M107 3.5h5M109.5 3v8M108 6h3" stroke="#ddd" stroke-width="1.2"/><text x="112" y="11.5" font-size="4" fill="#ddd" font-family="Liberation Sans">S</text>
<rect x="121" y="4" width="6" height="6" fill="#ddd"/><path d="M120 3l2 2M128 3l-2 2M120 11l2-2M128 11l-2-2" stroke="#ddd" stroke-width="0.8"/>
<path d="M133 7h7M136.5 3.5v7" stroke="#aaa" stroke-width="0.7"/><rect x="135" y="5.5" width="3" height="3" fill="none" stroke="#aaa" stroke-width="0.6"/>
<rect x="144" y="1" width="1" height="12" fill="#222"/>
<circle cx="150.5" cy="7" r="2.6" fill="#ddd"/><rect x="149" y="6.6" width="3" height="0.8" fill="#333"/>
<rect x="157" y="1.5" width="52" height="11" fill="#262626"/>
<circle cx="214.5" cy="7" r="2.6" fill="#ddd"/><path d="M213 7h3M214.5 5.5v3" stroke="#333" stroke-width="0.8"/>
<rect x="224.5" y="6" width="5.5" height="5" fill="#ddd"/><path d="M225.7 6v-1.5a1.5 1.5 0 0 1 3 0v1.5" stroke="#ddd" stroke-width="0.9" fill="none"/>
</svg>
<div style="position:absolute;left:174px;top:425.3px;font-family:'Liberation Mono', monospace;font-size:7.6px;line-height:1;color:#aaaaaa;white-space:nowrap;transform:scaleX(0.932);transform-origin:0 0;">20.39%</div>
<div style="position:absolute;left:0px;top:436px;width:235px;height:1px;background:#1e1e1e;"></div>
<div style="position:absolute;left:0px;top:437px;width:235px;height:14px;background:#2a2a2a;"></div>
<div style="position:absolute;left:15.5px;top:441.8px;font-family:'Liberation Mono', monospace;font-size:7px;line-height:1;color:#e8e8e8;white-space:nowrap;transform:scaleX(0.867);transform-origin:0 0;font-weight:bold;">LIBRARY</div>
<div style="position:absolute;left:0px;top:451px;width:64.5px;height:14px;background:#333333;"></div>
<div style="position:absolute;left:64.5px;top:451px;width:1.5px;height:76px;background:#1a1a1a;"></div>
<div style="position:absolute;left:66px;top:451px;width:170px;height:14px;background:#303030;"></div>
<div style="position:absolute;left:66px;top:451px;width:6px;height:14px;background:#262626;"></div>
<div style="position:absolute;left:74px;top:454px;width:75px;height:9px;background:#262626;border-radius:1.5px"></div>
<div style="position:absolute;left:75.5px;top:456px;font-family:'Liberation Mono', monospace;font-size:7.2px;line-height:1;color:#777;white-space:nowrap;">Search</div>
<svg style="left:150px;top:451px" width="86" height="14">
<path d="M4 3.5h7l-2.8 3.3v4l-1.4-1v-3z" fill="#ddd"/><path d="M10 9.5l.8.8l.8-.8" stroke="#aaa" stroke-width="0.5" fill="none"/>
<path d="M22 3l1.1 2.4l2.5.2l-1.9 1.6l.6 2.5l-2.3-1.4l-2.3 1.4l.6-2.5l-1.9-1.6l2.5-.2z" fill="#ddd"/><path d="M25 8.5h3M26.5 7v3" stroke="#ddd" stroke-width="0.8"/>
<g fill="#ddd"><rect x="58" y="3" width="2" height="2"/><rect x="61" y="3" width="2" height="2"/><rect x="64" y="3" width="2" height="2"/><rect x="58" y="6" width="2" height="2"/><rect x="61" y="6" width="2" height="2"/><rect x="64" y="6" width="2" height="2"/><rect x="58" y="9" width="2" height="2"/><rect x="61" y="9" width="2" height="2"/></g>
<rect x="70" y="1" width="14" height="12" fill="#262626"/><rect x="73" y="3.5" width="7" height="6" fill="none" stroke="#ddd" stroke-width="1"/><rect x="75" y="5" width="3" height="2.5" fill="#ddd"/><rect x="72.5" y="10.5" width="8" height="1" fill="#ddd"/>
</svg>
<svg style="left:0;top:437px" width="236" height="28">
<path d="M3 3h3l1 1h4v6h-8z" fill="#ddd"/><path d="M4 5.5h8.5l-1.5 4.5h-7.5z" fill="#f0f0f0" stroke="#2a2a2a" stroke-width="0.5"/>
<rect x="212.5" y="4" width="5.5" height="5.5" fill="none" stroke="#ccc" stroke-width="1"/><rect x="212.5" y="6.5" width="3" height="3" fill="#ccc"/>
<path d="M226 4l5.5 5.5M231.5 4l-5.5 5.5" stroke="#ccc" stroke-width="0.9"/>
<g transform="translate(0,14)">
<path d="M3 3h3l1 1h3v6.5h-7z" fill="#ddd"/><path d="M8 7v4M6 9l2 2l2-2" stroke="#333" stroke-width="1.2" fill="none"/>
<circle cx="22" cy="7" r="3.5" fill="#666"/><circle cx="24" cy="9" r="1.5" fill="#333"/>
<path d="M34 11l1-3l5-5l2 2l-5 5z" fill="#ddd"/>
</g>
</svg>
<div style="position:absolute;left:0px;top:465px;width:64.5px;height:62px;background:#2a2a2a;"></div>
<div style="position:absolute;left:58.8px;top:465px;width:5.7px;height:62px;background:#2c2c2c;"></div>
<div style="position:absolute;left:59.5px;top:478.7px;width:4.5px;height:6px;background:#3a3a3a;"></div>
<div style="position:absolute;left:1px;top:523px;width:50px;height:4px;background:#3a3a3a;"></div>
<div style="position:absolute;left:15.5px;top:469px;width:8.3px;height:8.5px;background:#d8d8d8;border-radius:1px"></div>
<svg style="left:15.5px;top:469px" width="9" height="9"><path d="M2 7c0-3 2-4 4.5-4M5 1.5l2 1.5l-2 1.5" stroke="#333" stroke-width="1.1" fill="none"/></svg>
<div style="position:absolute;left:27px;top:469.5px;font-family:'Liberation Sans', sans-serif;font-size:8.2px;line-height:1;color:#c8d0dc;white-space:nowrap;">Function</div>
<div style="position:absolute;left:15.5px;top:483px;width:8.3px;height:8.5px;background:#d8d8d8;border-radius:1px"></div>
<svg style="left:15.5px;top:483px" width="9" height="9"><path d="M2 7c0-3 2-4 4.5-4M5 1.5l2 1.5l-2 1.5" stroke="#333" stroke-width="1.1" fill="none"/></svg>
<div style="position:absolute;left:27px;top:483.5px;font-family:'Liberation Sans', sans-serif;font-size:8.2px;line-height:1;color:#c8d0dc;white-space:nowrap;">Control</div>
<svg style="left:4px;top:498.5px" width="6" height="6"><path d="M0.5 1.5l2.5 2.5l2.5-2.5" stroke="#888" stroke-width="0.8" fill="none"/></svg>
<div style="position:absolute;left:14px;top:497.3px;font-family:'Liberation Sans', sans-serif;font-size:8.2px;line-height:1;color:#e0e8f0;white-space:nowrap;font-weight:bold">Generators</div>
<div style="position:absolute;left:13px;top:507.5px;width:46px;height:13px;border:1px solid #3a7ad0;background:#2a2a2a"></div>
<svg style="left:18px;top:509px" width="9" height="9"><path d="M1 1l7 7M8 1l-7 7M1 4.5h7M4.5 1v7" stroke="#ccc" stroke-width="0.9"/><rect x="2" y="2" width="5" height="5" fill="none" stroke="#aaa" stroke-width="0.7"/></svg>
<div style="position:absolute;left:27.5px;top:511px;font-family:'Liberation Sans', sans-serif;font-size:8.2px;line-height:1;color:#e0e8f0;white-space:nowrap;">Noises</div>
<div style="position:absolute;left:66px;top:465px;width:170px;height:62px;background:#2b2b2b;"></div>
<div style="position:absolute;left:229.5px;top:465px;width:6px;height:62px;background:#262626;"></div>
<div style="position:absolute;left:230px;top:483.5px;width:4.5px;height:6px;background:#3a3a3a;"></div>
<svg style="left:66px;top:465px" width="164" height="62"><defs><filter id="th0" x="0" y="0" width="1" height="1" color-interpolation-filters="sRGB"><feTurbulence type="fractalNoise" baseFrequency="0.06 0.5" numOctaves="3" seed="5"/><feColorMatrix type="matrix" values="0.9 0 0 0 -0.07 0.9 0 0 0 -0.07 0.9 0 0 0 -0.07 0 0 0 0 1"/></filter><filter id="th1" x="0" y="0" width="1" height="1" color-interpolation-filters="sRGB"><feTurbulence type="fractalNoise" baseFrequency="0.07 0.2" numOctaves="3" seed="9"/><feColorMatrix type="matrix" values="0.8 0 0 0 0.22 0.8 0 0 0 0.22 0.8 0 0 0 0.22 0 0 0 0 1"/></filter><filter id="th2" x="0" y="0" width="1" height="1" color-interpolation-filters="sRGB"><feTurbulence type="fractalNoise" baseFrequency="0.04 0.8" numOctaves="3" seed="13"/><feColorMatrix type="matrix" values="0.85 0 0 0 0.1 0.85 0 0 0 0.1 0.85 0 0 0 0.1 0 0 0 0 1"/></filter><filter id="th3" x="0" y="0" width="1" height="1" color-interpolation-filters="sRGB"><feTurbulence type="fractalNoise" baseFrequency="0.5 1.2" numOctaves="2" seed="21"/><feColorMatrix type="matrix" values="0.9 0 0 0 0.1 0.9 0 0 0 0.1 0.9 0 0 0 0.1 0 0 0 0 1"/></filter></defs><rect x="0.2" y="0.8" width="34.2" height="31" filter="url(#th0)"/><g fill="#e8502a"><rect x="25.200000000000003" y="23.5" width="3" height="3"/><rect x="29.200000000000003" y="20.5" width="2.5" height="2.5"/><rect x="29.200000000000003" y="26.5" width="2.5" height="2.5"/><rect x="29.200000000000003" y="23.5" width="2.5" height="2.5"/></g><rect x="0.2" y="57" width="34.2" height="5" fill="#111"/><rect x="0.2" y="57" width="34.2" height="5" filter="url(#th3)" opacity="0.35"/><rect x="35.0" y="0.8" width="34.2" height="31" filter="url(#th1)"/><g fill="#e8502a"><rect x="60" y="23.5" width="3" height="3"/><rect x="64" y="20.5" width="2.5" height="2.5"/><rect x="64" y="26.5" width="2.5" height="2.5"/><rect x="64" y="23.5" width="2.5" height="2.5"/></g><rect x="35.0" y="57" width="34.2" height="5" fill="#111"/><rect x="35.0" y="57" width="34.2" height="5" filter="url(#th0)" opacity="0.35"/><rect x="70.5" y="0.8" width="34.2" height="31" filter="url(#th2)"/><g fill="#e8502a"><rect x="95.5" y="23.5" width="3" height="3"/><rect x="99.5" y="20.5" width="2.5" height="2.5"/><rect x="99.5" y="26.5" width="2.5" height="2.5"/><rect x="99.5" y="23.5" width="2.5" height="2.5"/></g><rect x="70.5" y="57" width="34.2" height="5" fill="#111"/><rect x="70.5" y="57" width="34.2" height="5" filter="url(#th1)" opacity="0.35"/><rect x="106.0" y="0.8" width="34.2" height="31" filter="url(#th3)"/><g fill="#e8502a"><rect x="131" y="23.5" width="3" height="3"/><rect x="135" y="20.5" width="2.5" height="2.5"/><rect x="135" y="26.5" width="2.5" height="2.5"/><rect x="135" y="23.5" width="2.5" height="2.5"/></g><rect x="106.0" y="57" width="34.2" height="5" fill="#111"/><rect x="106.0" y="57" width="34.2" height="5" filter="url(#th2)" opacity="0.35"/></svg>
<div style="position:absolute;left:67.7px;top:500.8px;font-family:'Liberation Sans', sans-serif;font-size:8.2px;line-height:1;color:#c8d0dc;white-space:nowrap;">Direct...</div>
<div style="position:absolute;left:102.5px;top:500.8px;font-family:'Liberation Sans', sans-serif;font-size:8.2px;line-height:1;color:#c8d0dc;white-space:nowrap;">Direct...</div>
<div style="position:absolute;left:138.0px;top:500.8px;font-family:'Liberation Sans', sans-serif;font-size:8.2px;line-height:1;color:#c8d0dc;white-space:nowrap;">Direct...</div>
<div style="position:absolute;left:173.5px;top:500.8px;font-family:'Liberation Sans', sans-serif;font-size:8.2px;line-height:1;color:#c8d0dc;white-space:nowrap;">Direct...</div>
<div style="position:absolute;left:67.7px;top:512.2px;font-family:'Liberation Sans', sans-serif;font-size:8.2px;line-height:1;color:#c8d0dc;white-space:nowrap;">Noise 2</div>
<div style="position:absolute;left:102.5px;top:512.2px;font-family:'Liberation Sans', sans-serif;font-size:8.2px;line-height:1;color:#c8d0dc;white-space:nowrap;">Noise 3</div>
<div style="position:absolute;left:138.0px;top:512.2px;font-family:'Liberation Sans', sans-serif;font-size:8.2px;line-height:1;color:#c8d0dc;white-space:nowrap;">Noise 4</div>
<div style="position:absolute;left:173.5px;top:512.2px;font-family:'Liberation Sans', sans-serif;font-size:8.2px;line-height:1;color:#c8d0dc;white-space:nowrap;">Scratc...</div>
<div style="position:absolute;left:0px;top:527px;width:235px;height:13.5px;background:#2b2b2b;"></div>
<div style="position:absolute;left:166px;top:529px;width:69px;height:10px;background:#353535;"></div>
<div style="position:absolute;left:0px;top:540.5px;width:1024px;height:1px;background:#1c1c1c;"></div>
<div style="position:absolute;left:0px;top:541.5px;width:1024px;height:14.5px;background:#2d2d2d;"></div>
<div style="position:absolute;left:812px;top:543.9px;width:69.6px;height:9.5px;background:#353535;"></div>
<div style="position:absolute;left:885px;top:546.8px;font-family:'Liberation Mono', monospace;font-size:6.4px;line-height:1;color:#c0c0c0;white-space:nowrap;transform:scaleX(0.835);transform-origin:0 0;">Substance Engine: Direct3D 10 Memory: 30%</div>
<div style="position:absolute;left:364px;top:554.8px;width:339px;height:1.2px;background:#f0f0f0;"></div>
<div style="position:absolute;left:235px;top:42.5px;width:2px;height:498px;background:#242424;"></div>
<div style="position:absolute;left:237px;top:42.5px;width:730.2px;height:13px;background:#2a2a2a;"></div>
<div style="position:absolute;left:237px;top:55.5px;width:730.2px;height:28px;background:#2f2f2f;"></div>
<div style="position:absolute;left:237px;top:83.3px;width:730.2px;height:1px;background:#262626;"></div>
<svg style="left:237px;top:42.5px" width="731" height="42">
<path d="M5 6.5h3M8 6.5l3-2.5M8 6.5l3 2.5" stroke="#ddd" stroke-width="1"/><rect x="3.5" y="5" width="3" height="3" fill="#ddd"/><rect x="10.5" y="3" width="2.5" height="2.5" fill="#ddd"/><rect x="10.5" y="8" width="2.5" height="2.5" fill="#ddd"/>
<g transform="translate(697.5 6.8) rotate(45)" fill="#d8d8d8"><rect x="-1.6" y="-4.2" width="3.2" height="3.6"/><rect x="-3" y="-0.8" width="6" height="1.4"/><rect x="-0.4" y="0.5" width="0.8" height="4.2" fill="#aaa"/></g>
<rect x="707" y="4" width="6" height="6" fill="none" stroke="#ccc" stroke-width="1"/><rect x="707" y="7" width="3" height="3" fill="#ccc"/>
<path d="M720.5 4l5.5 5.5M726 4l-5.5 5.5" stroke="#ccc" stroke-width="1"/>
<g transform="translate(0,13)">
<rect x="4" y="3.5" width="8" height="8" fill="#ccc"/><path d="M3 2.5l2 2M13 2.5l-2 2M3 12.5l2-2M13 12.5l-2-2" stroke="#ccc" stroke-width="1"/>
<path d="M17.5 7.5h9M22 3v9" stroke="#aaa" stroke-width="0.6" stroke-dasharray="1 1"/><rect x="20.5" y="5.5" width="3" height="4" fill="none" stroke="#bbb" stroke-width="0.7"/>
<path d="M33 5h2l1-1.5h3l1 1.5h2v6.5h-9z" fill="#ddd"/><circle cx="37.5" cy="8" r="1.8" fill="#2f2f2f"/>
<text x="49" y="12" font-family="Liberation Serif" font-style="italic" font-weight="bold" font-size="11" fill="#ddd">i</text><path d="M54 9l1 1l1-1" stroke="#aaa" stroke-width="0.6" fill="none"/>
<circle cx="65.5" cy="6.5" r="2.6" fill="none" stroke="#ddd" stroke-width="1"/><path d="M67.5 8.5l2 2" stroke="#ddd" stroke-width="1.2"/>
<path d="M76 7.5h12" stroke="#ccc" stroke-width="1"/><rect x="78" y="5" width="4" height="5" fill="#ddd"/><rect x="84" y="5.5" width="3" height="4" fill="#888"/>
<rect x="90" y="1" width="12.5" height="13" fill="#262626"/><rect x="93" y="6" width="3.5" height="3.5" fill="#eee"/><rect x="98" y="3.5" width="3" height="3" fill="#eee"/><rect x="98" y="8.5" width="3" height="3" fill="#eee"/><path d="M96 7.5h2" stroke="#eee"/>
<rect x="105.5" y="1" width="12.5" height="13" fill="#262626"/><path d="M108 12V5h7v7M110 12V7h5" stroke="#eee" stroke-width="1.2" fill="none"/>
<path d="M122 7.5h9" stroke="#f0b030" stroke-width="1.3"/><circle cx="122.5" cy="7.5" r="1.5" fill="#f0b030"/><circle cx="130.5" cy="7.5" r="1.5" fill="#f0b030"/><path d="M125.5 10.5l1 1l1-1" stroke="#aaa" stroke-width="0.6" fill="none"/>
<circle cx="138.5" cy="4.5" r="1.4" fill="#ddd"/><circle cx="145.5" cy="11" r="1.4" fill="#ddd"/><path d="M138.5 4.5h3v6.5h4" stroke="#ddd" stroke-width="1" fill="none"/>
<circle cx="157" cy="8.5" r="3.5" fill="none" stroke="#ddd" stroke-width="1"/><path d="M157 6.5v2h1.5M156 3.5h2" stroke="#ddd" stroke-width="0.9" fill="none"/>
<path d="M168 12l5-5" stroke="#ddd" stroke-width="1.6"/><circle cx="174" cy="5" r="2.2" fill="none" stroke="#ddd" stroke-width="1.2"/>
<rect x="180.5" y="1" width="12.5" height="13" fill="#262626"/><rect x="182.5" y="3" width="8.5" height="8.5" fill="none" stroke="#ddd" stroke-width="1"/><circle cx="187" cy="7.5" r="2" fill="#ddd"/>
<rect x="196" y="1" width="11.5" height="13" fill="#262626"/><path d="M199 3v9M204 3v9M197.5 5h8.5M197.5 10h8.5" stroke="#ddd" stroke-width="1"/>
</g>
</svg>
<div style="position:absolute;left:252.3px;top:46px;font-family:'Liberation Mono', monospace;font-size:6.8px;line-height:1;color:#e0e0e0;white-space:nowrap;transform:scaleX(0.911);transform-origin:0 0;font-weight:bold;">stone_01 - GRAPH</div>
<div style="position:absolute;left:240px;top:69.5px;width:4px;height:13.5px;background:#222"></div>
<svg style="left:237px;top:69.5px" width="460" height="14"><rect x="8.7" y="0.5" width="12.6" height="12.8" fill="#7a4a6e"/><rect x="22.2" y="0.5" width="12.6" height="12.8" fill="#c8c8c8"/><rect x="35.0" y="0.5" width="12.6" height="12.8" fill="#8a8468"/><rect x="48.8" y="0.5" width="12.6" height="12.8" fill="#4a4232"/><rect x="62.4" y="0.5" width="12.6" height="12.8" fill="#5a8a28"/><rect x="75.3" y="0.5" width="12.6" height="12.8" fill="#6a6040"/><rect x="88.8" y="0.5" width="12.6" height="12.8" fill="#2a6a7a"/><rect x="102.0" y="0.5" width="12.6" height="12.8" fill="#8ab850"/><rect x="115.5" y="0.5" width="12.6" height="12.8" fill="#6a5a98"/><rect x="129.0" y="0.5" width="12.6" height="12.8" fill="#2c2c2c"/><rect x="142.5" y="0.5" width="12.6" height="12.8" fill="#1e3a1a"/><rect x="154.8" y="0.5" width="12.6" height="12.8" fill="#4a7a30"/><rect x="168.3" y="0.5" width="12.6" height="12.8" fill="#7a7a7a"/><rect x="181.6" y="0.5" width="12.6" height="12.8" fill="#6a8a5a"/><rect x="195.0" y="0.5" width="12.6" height="12.8" fill="#6aa878"/><rect x="208.5" y="0.5" width="12.6" height="12.8" fill="#5a5ac8"/><rect x="222.0" y="0.5" width="12.6" height="12.8" fill="#101010"/><rect x="235.2" y="0.5" width="12.6" height="12.8" fill="#8a6a7c"/><rect x="248.7" y="0.5" width="12.6" height="12.8" fill="#c8a850"/><rect x="262.0" y="0.5" width="12.6" height="12.8" fill="#a87a90"/><rect x="275.4" y="0.5" width="12.6" height="12.8" fill="#4a6aa0"/><rect x="288.6" y="0.5" width="12.6" height="12.8" fill="#a03a48"/><rect x="302.0" y="0.5" width="12.6" height="12.8" fill="#0a0a0a"/><rect x="315.2" y="0.5" width="12.6" height="12.8" fill="#3a8080"/><rect x="329.0" y="0.5" width="12.6" height="12.8" fill="#9a98b8"/><rect x="342.0" y="0.5" width="12.6" height="12.8" fill="#9a98b8"/><rect x="355.4" y="0.5" width="12.6" height="12.8" fill="#9a98b8"/><rect x="369.3" y="0.5" width="12.6" height="12.8" fill="#8a88b0"/><rect x="10.5" y="3" width="9" height="7" fill="none" stroke="#d0b0c8" stroke-width="0.8"/><path d="M11 9l2-3l2 2l2-3l2 4z" fill="#d0b0c8"/><rect x="24" y="2.5" width="6" height="6" fill="none" stroke="#fff" stroke-width="0.8"/><rect x="26.5" y="5" width="6" height="6" fill="#fff"/><path d="M41.30000000000001 3c2 3 3 4 3 6a3 3 0 0 1 -6 0c0-2 1-3 3-6z" fill="#eee"/><path d="M51 4h2l5 6h2M51 10h2l5-6h2" stroke="#ddd" stroke-width="0.9" fill="none"/><path d="M64 11l9-8M64 2v9h9" stroke="#e8f0d0" stroke-width="0.8" fill="none"/><path d="M80 5c2 3 3 4 3 5.5a3 3 0 0 1 -6 0c0-1.5 1-2.5 3-5.5z" fill="#ddd"/><path d="M83 6l3-3M84 3h2v2" stroke="#ddd" stroke-width="0.8" fill="none"/><rect x="90.5" y="2" width="9" height="9" fill="none" stroke="#bde" stroke-width="0.8"/><path d="M92 9l6-6M92 5l2 2l2-3" stroke="#bde" stroke-width="0.8" fill="none"/><path d="M104 11l8-8" stroke="#fff" stroke-width="1.2"/><path d="M109 3h3v3" stroke="#fff" stroke-width="1" fill="none"/><circle cx="121.80000000000001" cy="6.8" r="4" fill="none" stroke="#8a7ab8" stroke-width="1.5"/><g fill="#eee"><rect x="131" y="2.5" width="8" height="2"/><rect x="131" y="5.5" width="3.5" height="2"/><rect x="135.5" y="5.5" width="3.5" height="2"/><rect x="131" y="8.5" width="3.5" height="2"/><rect x="135.5" y="8.5" width="3.5" height="2"/></g><rect x="145" y="5" width="7" height="6" fill="#ddd"/><path d="M148.5 1v3M147 2.5l1.5 1.5l1.5-1.5" stroke="#ddd" stroke-width="0.8" fill="none"/><rect x="157" y="5" width="8" height="6" fill="#ddd"/><circle cx="164" cy="3.5" r="1.5" fill="none" stroke="#ddd" stroke-width="0.7"/><circle cx="171" cy="6.8" r="1.6" fill="#f0a030"/><path d="M173 6.8h4" stroke="#bbb" stroke-width="1"/><circle cx="178" cy="6.8" r="1.4" fill="#bbb"/><circle cx="188" cy="7" r="3.6" fill="#eee"/><path d="M185.5 9.5l5-5" stroke="#6a8a5a" stroke-width="1.5"/><path d="M197 11.5h10.5l-4-8l-1.5 3l-1.5-1z" fill="#eef"/><circle cx="214.8" cy="6.8" r="4" fill="none" stroke="#e060d0" stroke-width="2"/><circle cx="214.8" cy="6.8" r="4" fill="none" stroke="#60d0f0" stroke-width="1" stroke-dasharray="3 3"/><path d="M223 10l6-7M224 7l4-4M226 11l5-6" stroke="#888" stroke-width="0.6"/><text x="229" y="11.5" font-size="4" fill="#ccc" font-family="Liberation Mono">01</text><path d="M237 4h9M238 4v6M245 4v6M238 7l3 2l4-3" stroke="#eee" stroke-width="0.8" fill="none"/><path d="M250 11h10l-5-8z" fill="#fff"/><path d="M253.5 11l1.5-4l1.5 4" stroke="#c8a850" stroke-width="0.6" fill="none"/><text x="264.5" y="11" font-family="Liberation Sans" font-size="10" fill="#fff">A</text><rect x="277.5" y="2.5" width="8.5" height="8.5" fill="none" stroke="#eee" stroke-width="0.8" stroke-dasharray="1.5 1"/><path d="M291 5l4-2l3 4l-4 3z" fill="#fff"/><circle cx="298.5" cy="10.5" r="1.1" fill="#fff"/><text x="303.5" y="7" font-size="5" fill="#ddd" font-family="Liberation Mono">¹</text><text x="307" y="11.5" font-size="4" fill="#ddd" font-family="Liberation Mono">01</text><path d="M304 3l2 3l2 1" stroke="#ddd" stroke-width="0.7" fill="none"/><rect x="317" y="2.5" width="9" height="8.5" fill="none" stroke="#bfe" stroke-width="0.8"/><path d="M318 4h7M318 7h7M318 9.5h7" stroke="#bfe" stroke-width="0.6" stroke-dasharray="1 1"/><rect x="330.79999999999995" y="2.5" width="9" height="8.5" fill="none" stroke="#eef" stroke-width="0.9"/><circle cx="339.79999999999995" cy="6.8" r="1.3" fill="#fff"/><rect x="343.79999999999995" y="2.5" width="9" height="8.5" fill="none" stroke="#eef" stroke-width="0.9"/><circle cx="352.79999999999995" cy="6.8" r="1.3" fill="#fff"/><rect x="357.19999999999993" y="2.5" width="9" height="8.5" fill="none" stroke="#eef" stroke-width="0.9"/><circle cx="366.19999999999993" cy="6.8" r="1.3" fill="#fff"/><rect x="371.0999999999999" y="2.5" width="9" height="8.5" fill="none" stroke="#eef" stroke-width="0.9"/><circle cx="380.0999999999999" cy="6.8" r="1.3" fill="#fff"/><path d="M386 3h8v5h-3l-2 2v-2h-3z" fill="#eee"/><path d="M397 7h11" stroke="#ddd" stroke-width="1"/><rect x="400.5" y="5" width="4" height="4" rx="1" fill="#eee"/><rect x="411" y="3" width="8" height="8" fill="none" stroke="#ddd" stroke-width="0.9"/><path d="M415 3v8M415 5.5h4M415 8h4" stroke="#ddd" stroke-width="0.8"/><path d="M428 3h2.5l.5 4l1 1h-5.5l1-1z" fill="#ddd"/><path d="M429.20000000000005 8v3" stroke="#ddd" stroke-width="0.8"/></svg>
<div style="position:absolute;left:676.5px;top:70px;width:2px;height:13px;background:#222;"></div>
<div style="position:absolute;left:681.3px;top:74.6px;font-family:'Liberation Mono', monospace;font-size:7.2px;line-height:1;color:#c8c8c8;white-space:nowrap;transform:scaleX(0.965);transform-origin:0 0;">Parent Size:</div>
<svg style="left:730px;top:69.5px" width="160" height="14">
<rect x="3.4" y="1.5" width="29.5" height="11" fill="#383838"/><text x="5" y="10.5" font-family="Liberation Mono" font-size="7" fill="#5a5a5a">256</text><path d="M27 6l1.5 1.5l1.5-1.5" stroke="#666" stroke-width="0.7" fill="none"/>
<path d="M40 9.5l2-2M41 5.5a1.5 1.5 0 0 1 3 0M44 10.5a1.5 1.5 0 0 1 -3 0" stroke="#555" stroke-width="0.9" fill="none" transform="rotate(-45 42 8)"/>
<rect x="49.6" y="1.5" width="29.6" height="11" fill="#383838"/><text x="52" y="10.5" font-family="Liberation Mono" font-size="7" fill="#5a5a5a">256</text><path d="M73.5 6l1.5 1.5l1.5-1.5" stroke="#666" stroke-width="0.7" fill="none"/>
<circle cx="88.5" cy="7.5" r="3.5" fill="none" stroke="#ccc" stroke-width="0.9"/><path d="M86.5 5.5l4 4" stroke="#ccc" stroke-width="0.8"/>
<rect x="98.5" y="0.5" width="2" height="13" fill="#222"/>
<circle cx="107" cy="7.5" r="1.8" fill="#ddd"/><circle cx="111.5" cy="7.5" r="1.8" fill="#ddd"/><path d="M105 7.5h9" stroke="#ddd" stroke-width="0.8"/>
<circle cx="124.5" cy="5" r="1.8" fill="#ddd"/><circle cx="124.5" cy="9.5" r="1.8" fill="#ddd"/><path d="M124.5 2.5v10" stroke="#ddd" stroke-width="0.8"/>
<path d="M137 2.5v8h8M139 12V5h6M141 12v-3a1.5 1.5 0 0 1 3 0v3" stroke="#ddd" stroke-width="0.9" fill="none"/>
</svg>
<svg style="left:237px;top:84px" width="731" height="457" viewBox="237 84 731 457"><defs><filter id="fnoise" x="0" y="0" width="1" height="1" color-interpolation-filters="sRGB"><feTurbulence type="fractalNoise" baseFrequency="0.5" numOctaves="2" seed="3"/><feColorMatrix type="matrix" values="0.95 0 0 0 0.2 0.95 0 0 0 0.2 0.95 0 0 0 0.2 0 0 0 0 1"/><feGaussianBlur stdDeviation="0.35"/></filter><filter id="fnoise2" x="0" y="0" width="1" height="1" color-interpolation-filters="sRGB"><feTurbulence type="fractalNoise" baseFrequency="0.5" numOctaves="2" seed="8"/><feColorMatrix type="matrix" values="0.95 0 0 0 0.2 0.95 0 0 0 0.2 0.95 0 0 0 0.2 0 0 0 0 1"/><feGaussianBlur stdDeviation="0.35"/></filter><filter id="flnoise" x="0" y="0" width="1" height="1" color-interpolation-filters="sRGB"><feTurbulence type="fractalNoise" baseFrequency="0.5" numOctaves="2" seed="5"/><feColorMatrix type="matrix" values="0.7 0 0 0 0.4 0.7 0 0 0 0.4 0.7 0 0 0 0.4 0 0 0 0 1"/><feGaussianBlur stdDeviation="0.35"/></filter><filter id="fgnoise" x="0" y="0" width="1" height="1" color-interpolation-filters="sRGB"><feTurbulence type="fractalNoise" baseFrequency="0.5" numOctaves="2" seed="6"/><feColorMatrix type="matrix" values="0.8 0 0 0 0.15 0.8 0 0 0 0.15 0.8 0 0 0 0.15 0 0 0 0 1"/><feGaussianBlur stdDeviation="0.35"/></filter><filter id="fdark" x="0" y="0" width="1" height="1" color-interpolation-filters="sRGB"><feTurbulence type="fractalNoise" baseFrequency="0.45" numOctaves="2" seed="4"/><feColorMatrix type="matrix" values="1.9 0 0 0 -0.55 1.9 0 0 0 -0.55 1.9 0 0 0 -0.55 0 0 0 0 1"/><feGaussianBlur stdDeviation="0.35"/></filter><filter id="fwb" x="0" y="0" width="1" height="1" color-interpolation-filters="sRGB"><feTurbulence type="fractalNoise" baseFrequency="0.45" numOctaves="2" seed="9"/><feColorMatrix type="matrix" values="2.4 0 0 0 -0.4 2.4 0 0 0 -0.4 2.4 0 0 0 -0.4 0 0 0 0 1"/><feGaussianBlur stdDeviation="0.35"/></filter><filter id="fwhite" x="0" y="0" width="1" height="1" color-interpolation-filters="sRGB"><feTurbulence type="fractalNoise" baseFrequency="0.7" numOctaves="1" seed="2"/><feColorMatrix type="matrix" values="1.5 0 0 0 0.28 1.5 0 0 0 0.28 1.5 0 0 0 0.28 0 0 0 0 1"/><feGaussianBlur stdDeviation="0.35"/></filter><filter id="fwavy" x="0" y="0" width="1" height="1" color-interpolation-filters="sRGB"><feTurbulence type="fractalNoise" baseFrequency="0.1 0.45" numOctaves="2" seed="7"/><feColorMatrix type="matrix" values="2.0 0 0 0 -0.35 2.0 0 0 0 -0.35 2.0 0 0 0 -0.35 0 0 0 0 1"/><feGaussianBlur stdDeviation="0.35"/></filter><filter id="fblack2" x="0" y="0" width="1" height="1" color-interpolation-filters="sRGB"><feTurbulence type="fractalNoise" baseFrequency="0.8" numOctaves="2" seed="11"/><feColorMatrix type="matrix" values="2.5 0 0 0 -1.5 2.5 0 0 0 -1.5 2.5 0 0 0 -1.5 0 0 0 0 1"/><feGaussianBlur stdDeviation="0.35"/></filter><pattern id="grid" x="250.5" y="226" width="9.18" height="9.18" patternUnits="userSpaceOnUse"><rect width="9.18" height="9.18" fill="#3e3e3e"/><rect x="0" y="0" width="0.9" height="9.18" fill="#363636"/><rect x="4.59" y="0" width="0.8" height="9.18" fill="#393939"/><rect x="0" y="0" width="9.18" height="0.9" fill="#363636"/><rect x="0" y="4.59" width="9.18" height="0.8" fill="#393939"/></pattern><pattern id="chk" x="0" y="0" width="4" height="4" patternUnits="userSpaceOnUse"><rect width="4" height="4" fill="#f0f0f0"/><rect width="2" height="2" fill="#d0d0d0"/><rect x="2" y="2" width="2" height="2" fill="#d0d0d0"/></pattern></defs><rect x="237" y="84.3" width="730.2" height="456.2" fill="url(#grid)"/><path d="M447.0 177.5C451.0 177.5 449.0 186.5 453.0 186.5" stroke="#a6a6a6" stroke-width="1.8" fill="none"/><path d="M466.0 168.5C470.0 168.5 467.0 177.5 471.0 177.5" stroke="#a6a6a6" stroke-width="1.8" fill="none"/><path d="M466.0 186.5C470.0 186.5 467.0 196.5 471.0 196.5" stroke="#a6a6a6" stroke-width="1.8" fill="none"/><path d="M484.0 159.5C488.0 159.5 485.0 168.5 489.0 168.5" stroke="#a6a6a6" stroke-width="1.8" fill="none"/><path d="M484.0 177.5C488.0 177.5 485.0 186.5 489.0 186.5" stroke="#a6a6a6" stroke-width="1.8" fill="none"/><path d="M484.0 196.5C488.0 196.5 485.0 186.5 489.0 186.5" stroke="#a6a6a6" stroke-width="1.8" fill="none"/><path d="M502.0 168.5C506.0 168.5 504.0 177.5 508.0 177.5" stroke="#a6a6a6" stroke-width="1.8" fill="none"/><path d="M502.0 186.5C506.0 186.5 504.0 177.5 508.0 177.5" stroke="#a6a6a6" stroke-width="1.8" fill="none"/><path d="M521.0 177.5C525.0 177.5 522.0 186.5 526.0 186.5" stroke="#a6a6a6" stroke-width="1.8" fill="none"/><path d="M521.0 196.5C525.0 196.5 522.0 186.5 526.0 186.5" stroke="#a6a6a6" stroke-width="1.8" fill="none"/><path d="M539.0 186.5C543.0 186.5 540.0 186.5 544.0 186.5" stroke="#a6a6a6" stroke-width="1.8" fill="none"/><path d="M557.0 186.5C561.0 186.5 559.0 186.5 563.0 186.5" stroke="#a6a6a6" stroke-width="1.8" fill="none"/><path d="M557.0 168.5C561.0 168.5 559.0 168.5 563.0 168.5" stroke="#a6a6a6" stroke-width="1.8" fill="none"/><path d="M576.0 168.5C580.0 168.5 577.0 177.5 581.0 177.5" stroke="#a6a6a6" stroke-width="1.8" fill="none"/><path d="M576.0 186.5C580.0 186.5 577.0 177.5 581.0 177.5" stroke="#a6a6a6" stroke-width="1.8" fill="none"/><path d="M594.0 177.5C598.0 177.5 596.0 177.5 600.0 177.5" stroke="#a6a6a6" stroke-width="1.8" fill="none"/><path d="M631.0 159.5C635.0 159.5 632.0 168.5 636.0 168.5" stroke="#a6a6a6" stroke-width="1.8" fill="none"/><path d="M631.0 196.5C635.0 196.5 632.0 186.5 636.0 186.5" stroke="#a6a6a6" stroke-width="1.8" fill="none"/><path d="M704.0 205.5C708.0 205.5 706.0 205.5 710.0 205.5" stroke="#a6a6a6" stroke-width="1.8" fill="none"/><path d="M264.0 251.5C268.0 251.5 265.0 251.5 269.0 251.5" stroke="#a6a6a6" stroke-width="1.8" fill="none"/><path d="M282.0 251.5C286.0 251.5 283.0 251.5 287.0 251.5" stroke="#a6a6a6" stroke-width="1.8" fill="none"/><path d="M300.0 232.5C304.0 232.5 302.0 242.5 306.0 242.5" stroke="#a6a6a6" stroke-width="1.8" fill="none"/><path d="M300.0 251.5C304.0 251.5 302.0 242.5 306.0 242.5" stroke="#a6a6a6" stroke-width="1.8" fill="none"/><path d="M319.0 242.5C323.0 242.5 320.0 251.5 324.0 251.5" stroke="#a6a6a6" stroke-width="1.8" fill="none"/><path d="M319.0 242.5C329.4 242.5 331.6 242.5 342.0 242.5" stroke="#a6a6a6" stroke-width="1.8" fill="none"/><path d="M337.0 251.5C341.0 251.5 338.0 242.5 342.0 242.5" stroke="#a6a6a6" stroke-width="1.8" fill="none"/><path d="M355.0 260.5C359.0 260.5 357.0 251.5 361.0 251.5" stroke="#a6a6a6" stroke-width="1.8" fill="none"/><path d="M355.0 242.5C365.8 242.5 368.2 242.5 379.0 242.5" stroke="#a6a6a6" stroke-width="1.8" fill="none"/><path d="M374.0 251.5C378.0 251.5 375.0 242.5 379.0 242.5" stroke="#a6a6a6" stroke-width="1.8" fill="none"/><path d="M392.0 242.5C396.0 242.5 394.0 232.5 398.0 232.5" stroke="#a6a6a6" stroke-width="1.8" fill="none"/><path d="M411.0 232.5C415.0 232.5 412.0 242.5 416.0 242.5" stroke="#a6a6a6" stroke-width="1.8" fill="none"/><path d="M429.0 278.5C433.0 278.5 430.0 287.5 434.0 287.5" stroke="#a6a6a6" stroke-width="1.8" fill="none"/><path d="M429.0 297.5C433.0 297.5 430.0 287.5 434.0 287.5" stroke="#a6a6a6" stroke-width="1.8" fill="none"/><path d="M411.0 287.5C415.0 287.5 412.0 297.5 416.0 297.5" stroke="#a6a6a6" stroke-width="1.8" fill="none"/><path d="M447.0 269.5C451.0 269.5 449.0 278.5 453.0 278.5" stroke="#a6a6a6" stroke-width="1.8" fill="none"/><path d="M447.0 287.5C451.0 287.5 449.0 278.5 453.0 278.5" stroke="#a6a6a6" stroke-width="1.8" fill="none"/><path d="M466.0 278.5C470.0 278.5 467.0 269.5 471.0 269.5" stroke="#a6a6a6" stroke-width="1.8" fill="none"/><path d="M466.0 278.5C470.0 278.5 467.0 287.5 471.0 287.5" stroke="#a6a6a6" stroke-width="1.8" fill="none"/><path d="M484.0 269.5C488.0 269.5 485.0 278.5 489.0 278.5" stroke="#a6a6a6" stroke-width="1.8" fill="none"/><path d="M484.0 287.5C488.0 287.5 485.0 278.5 489.0 278.5" stroke="#a6a6a6" stroke-width="1.8" fill="none"/><path d="M502.0 278.5C506.0 278.5 504.0 269.5 508.0 269.5" stroke="#a6a6a6" stroke-width="1.8" fill="none"/><path d="M466.0 278.5C493.0 278.5 499.0 260.5 526.0 260.5" stroke="#a6a6a6" stroke-width="1.8" fill="none"/><path d="M300.0 287.5C304.0 287.5 302.0 287.5 306.0 287.5" stroke="#a6a6a6" stroke-width="1.8" fill="none"/><path d="M319.0 287.5C323.0 287.5 320.0 297.5 324.0 297.5" stroke="#a6a6a6" stroke-width="1.8" fill="none"/><path d="M319.0 306.5C323.0 306.5 320.0 297.5 324.0 297.5" stroke="#a6a6a6" stroke-width="1.8" fill="none"/><path d="M319.0 306.5C323.0 306.5 320.0 315.5 324.0 315.5" stroke="#a6a6a6" stroke-width="1.8" fill="none"/><path d="M337.0 297.5C341.0 297.5 338.0 306.5 342.0 306.5" stroke="#a6a6a6" stroke-width="1.8" fill="none"/><path d="M337.0 315.5C355.9 315.5 360.1 315.5 379.0 315.5" stroke="#a6a6a6" stroke-width="1.8" fill="none"/><path d="M355.0 306.5C359.0 306.5 357.0 306.5 361.0 306.5" stroke="#a6a6a6" stroke-width="1.8" fill="none"/><path d="M355.0 324.5C359.0 324.5 357.0 306.5 361.0 306.5" stroke="#a6a6a6" stroke-width="1.8" fill="none"/><path d="M374.0 306.5C378.0 306.5 375.0 315.5 379.0 315.5" stroke="#a6a6a6" stroke-width="1.8" fill="none"/><path d="M392.0 315.5C396.0 315.5 394.0 324.5 398.0 324.5" stroke="#a6a6a6" stroke-width="1.8" fill="none"/><path d="M392.0 333.5C396.0 333.5 394.0 324.5 398.0 324.5" stroke="#a6a6a6" stroke-width="1.8" fill="none"/><path d="M411.0 324.5C415.0 324.5 412.0 333.5 416.0 333.5" stroke="#a6a6a6" stroke-width="1.8" fill="none"/><path d="M411.0 343.5C415.0 343.5 412.0 333.5 416.0 333.5" stroke="#a6a6a6" stroke-width="1.8" fill="none"/><path d="M392.0 352.5C396.0 352.5 394.0 343.5 398.0 343.5" stroke="#a6a6a6" stroke-width="1.8" fill="none"/><path d="M337.0 333.5C341.0 333.5 338.0 324.5 342.0 324.5" stroke="#a6a6a6" stroke-width="1.8" fill="none"/><path d="M429.0 333.5C433.0 333.5 430.0 324.5 434.0 324.5" stroke="#a6a6a6" stroke-width="1.8" fill="none"/><path d="M484.0 352.5C488.0 352.5 485.0 352.5 489.0 352.5" stroke="#a6a6a6" stroke-width="1.8" fill="none"/><path d="M502.0 352.5C506.0 352.5 504.0 361.5 508.0 361.5" stroke="#a6a6a6" stroke-width="1.8" fill="none"/><path d="M502.0 370.5C506.0 370.5 504.0 361.5 508.0 361.5" stroke="#a6a6a6" stroke-width="1.8" fill="none"/><path d="M521.0 361.5C525.0 361.5 522.0 370.5 526.0 370.5" stroke="#a6a6a6" stroke-width="1.8" fill="none"/><path d="M521.0 379.5C525.0 379.5 522.0 370.5 526.0 370.5" stroke="#a6a6a6" stroke-width="1.8" fill="none"/><path d="M539.0 370.5C543.0 370.5 540.0 379.5 544.0 379.5" stroke="#a6a6a6" stroke-width="1.8" fill="none"/><path d="M539.0 388.5C543.0 388.5 540.0 379.5 544.0 379.5" stroke="#a6a6a6" stroke-width="1.8" fill="none"/><path d="M557.0 379.5C561.0 379.5 559.0 370.5 563.0 370.5" stroke="#a6a6a6" stroke-width="1.8" fill="none"/><path d="M557.0 379.5C561.0 379.5 559.0 388.5 563.0 388.5" stroke="#a6a6a6" stroke-width="1.8" fill="none"/><path d="M576.0 388.5C580.0 388.5 577.0 398.5 581.0 398.5" stroke="#a6a6a6" stroke-width="1.8" fill="none"/><path d="M576.0 407.5C580.0 407.5 577.0 398.5 581.0 398.5" stroke="#a6a6a6" stroke-width="1.8" fill="none"/><path d="M594.0 324.5C598.0 324.5 596.0 333.5 600.0 333.5" stroke="#a6a6a6" stroke-width="1.8" fill="none"/><path d="M594.0 343.5C604.8 343.5 607.2 343.5 618.0 343.5" stroke="#a6a6a6" stroke-width="1.8" fill="none"/><path d="M613.0 333.5C617.0 333.5 614.0 343.5 618.0 343.5" stroke="#a6a6a6" stroke-width="1.8" fill="none"/><path d="M631.0 343.5C635.0 343.5 632.0 343.5 636.0 343.5" stroke="#a6a6a6" stroke-width="1.8" fill="none"/><path d="M631.0 379.5C635.0 379.5 632.0 379.5 636.0 379.5" stroke="#a6a6a6" stroke-width="1.8" fill="none"/><path d="M631.0 398.5C635.0 398.5 632.0 407.5 636.0 407.5" stroke="#a6a6a6" stroke-width="1.8" fill="none"/><path d="M631.0 416.5C635.0 416.5 632.0 407.5 636.0 407.5" stroke="#a6a6a6" stroke-width="1.8" fill="none"/><path d="M649.0 407.5C653.0 407.5 651.0 398.5 655.0 398.5" stroke="#a6a6a6" stroke-width="1.8" fill="none"/><path d="M649.0 407.5C653.0 407.5 651.0 416.5 655.0 416.5" stroke="#a6a6a6" stroke-width="1.8" fill="none"/><path d="M668.0 398.5C672.0 398.5 669.0 407.5 673.0 407.5" stroke="#a6a6a6" stroke-width="1.8" fill="none"/><path d="M668.0 416.5C672.0 416.5 669.0 407.5 673.0 407.5" stroke="#a6a6a6" stroke-width="1.8" fill="none"/><path d="M686.0 407.5C690.0 407.5 687.0 407.5 691.0 407.5" stroke="#a6a6a6" stroke-width="1.8" fill="none"/><path d="M704.0 407.5C708.0 407.5 706.0 416.5 710.0 416.5" stroke="#a6a6a6" stroke-width="1.8" fill="none"/><path d="M704.0 425.5C708.0 425.5 706.0 416.5 710.0 416.5" stroke="#a6a6a6" stroke-width="1.8" fill="none"/><path d="M613.0 425.5C617.0 425.5 614.0 444.5 618.0 444.5" stroke="#a6a6a6" stroke-width="1.8" fill="none"/><path d="M801.0 352.5C805.0 352.5 802.0 361.5 806.0 361.5" stroke="#a6a6a6" stroke-width="1.8" fill="none"/><path d="M819.0 361.5C823.0 361.5 820.0 370.5 824.0 370.5" stroke="#a6a6a6" stroke-width="1.8" fill="none"/><path d="M819.0 379.5C823.0 379.5 820.0 370.5 824.0 370.5" stroke="#a6a6a6" stroke-width="1.8" fill="none"/><path d="M837.0 370.5C841.0 370.5 839.0 379.5 843.0 379.5" stroke="#a6a6a6" stroke-width="1.8" fill="none"/><path d="M837.0 388.5C841.0 388.5 839.0 379.5 843.0 379.5" stroke="#a6a6a6" stroke-width="1.8" fill="none"/><path d="M856.0 379.5C860.0 379.5 857.0 388.5 861.0 388.5" stroke="#a6a6a6" stroke-width="1.8" fill="none"/><path d="M856.0 398.5C860.0 398.5 857.0 388.5 861.0 388.5" stroke="#a6a6a6" stroke-width="1.8" fill="none"/><path d="M874.0 388.5C878.0 388.5 876.0 398.5 880.0 398.5" stroke="#a6a6a6" stroke-width="1.8" fill="none"/><path d="M874.0 407.5C878.0 407.5 876.0 398.5 880.0 398.5" stroke="#a6a6a6" stroke-width="1.8" fill="none"/><path d="M893.0 398.5C897.0 398.5 894.0 388.5 898.0 388.5" stroke="#a6a6a6" stroke-width="1.8" fill="none"/><path d="M893.0 398.5C897.0 398.5 894.0 407.5 898.0 407.5" stroke="#a6a6a6" stroke-width="1.8" fill="none"/><path d="M911.0 407.5C915.0 407.5 912.0 416.5 916.0 416.5" stroke="#a6a6a6" stroke-width="1.8" fill="none"/><path d="M911.0 425.5C915.0 425.5 912.0 416.5 916.0 416.5" stroke="#a6a6a6" stroke-width="1.8" fill="none"/><path d="M819.0 398.5C823.0 398.5 820.0 388.5 824.0 388.5" stroke="#a6a6a6" stroke-width="1.8" fill="none"/><path d="M466.0 353.0C470.0 353.0 467.0 352.5 471.0 352.5" stroke="#a6a6a6" stroke-width="1.8" fill="none"/><path d="M502.0 398.0C512.8 398.0 515.2 388.5 526.0 388.5" stroke="#a6a6a6" stroke-width="1.8" fill="none"/><path d="M723.0 416.5C727.0 416.5 724.0 416.5 728.0 416.5" stroke="#a6a6a6" stroke-width="1.8" fill="none"/><path d="M613.0 177.5C617.0 177.5 614.0 177.5 618.0 177.5" stroke="#f2a22c" stroke-width="1.9" fill="none"/><path d="M649.0 168.5C653.0 168.5 651.0 168.5 655.0 168.5" stroke="#f2a22c" stroke-width="1.9" fill="none"/><path d="M631.0 177.5C635.0 177.5 632.0 186.5 636.0 186.5" stroke="#f2a22c" stroke-width="1.9" fill="none"/><path d="M649.0 186.5C653.0 186.5 651.0 186.5 655.0 186.5" stroke="#f2a22c" stroke-width="1.9" fill="none"/><path d="M668.0 168.5C672.0 168.5 669.0 186.5 673.0 186.5" stroke="#f2a22c" stroke-width="1.9" fill="none"/><path d="M668.0 186.5C672.0 186.5 669.0 186.5 673.0 186.5" stroke="#f2a22c" stroke-width="1.9" fill="none"/><path d="M686.0 186.5C690.0 186.5 687.0 177.5 691.0 177.5" stroke="#f2a22c" stroke-width="1.9" fill="none"/><path d="M686.0 186.5C696.8 186.5 699.2 186.5 710.0 186.5" stroke="#f2a22c" stroke-width="1.9" fill="none"/><path d="M704.0 177.5C708.0 177.5 706.0 186.5 710.0 186.5" stroke="#f2a22c" stroke-width="1.9" fill="none"/><path d="M723.0 186.5C727.0 186.5 724.0 196.5 728.0 196.5" stroke="#f2a22c" stroke-width="1.9" fill="none"/><path d="M723.0 205.5C727.0 205.5 724.0 196.5 728.0 196.5" stroke="#f2a22c" stroke-width="1.9" fill="none"/><path d="M741.0 196.5C745.0 196.5 742.0 196.5 746.0 196.5" stroke="#f2a22c" stroke-width="1.9" fill="none"/><path d="M521.0 269.5C525.0 269.5 522.0 260.5 526.0 260.5" stroke="#f2a22c" stroke-width="1.9" fill="none"/><path d="M521.0 251.5C525.0 251.5 522.0 260.5 526.0 260.5" stroke="#f2a22c" stroke-width="1.9" fill="none"/><path d="M576.0 370.5C580.0 370.5 577.0 361.5 581.0 361.5" stroke="#f2a22c" stroke-width="1.9" fill="none"/><path d="M576.0 352.5C580.0 352.5 577.0 361.5 581.0 361.5" stroke="#f2a22c" stroke-width="1.9" fill="none"/><path d="M649.0 343.5C653.0 343.5 651.0 361.5 655.0 361.5" stroke="#f2a22c" stroke-width="1.9" fill="none"/><path d="M668.0 361.5C678.4 361.5 680.6 370.5 691.0 370.5" stroke="#f2a22c" stroke-width="1.9" fill="none"/><path d="M668.0 379.5C678.4 379.5 680.6 370.5 691.0 370.5" stroke="#f2a22c" stroke-width="1.9" fill="none"/><path d="M741.0 416.5C745.0 416.5 742.0 416.5 746.0 416.5" stroke="#f2a22c" stroke-width="1.9" fill="none"/><path d="M759.0 416.5C763.5 416.5 764.5 398.5 769.0 398.5" stroke="#f2a22c" stroke-width="1.9" fill="none"/><path d="M782.0 398.5C786.0 398.5 784.0 388.5 788.0 388.5" stroke="#f2a22c" stroke-width="1.9" fill="none"/><path d="M782.0 398.5C786.0 398.5 784.0 407.5 788.0 407.5" stroke="#f2a22c" stroke-width="1.9" fill="none"/><path d="M801.0 407.5C805.0 407.5 802.0 416.5 806.0 416.5" stroke="#f2a22c" stroke-width="1.9" fill="none"/><path d="M929.0 416.5C933.0 416.5 931.0 416.5 935.0 416.5" stroke="#f2a22c" stroke-width="1.9" fill="none"/><path d="M741.0 398.5C745.0 398.5 742.0 416.5 746.0 416.5" stroke="#f2a22c" stroke-width="1" fill="none"/><path d="M429.0 260.5C433.0 260.5 430.0 269.5 434.0 269.5" stroke="#f2a22c" stroke-width="1" fill="none"/><path d="M605 183 C 657.4 219.7, 727.9 324.4, 806.5 379.5" stroke="#a6a6a6" stroke-width="1.8" fill="none"/><path d="M539 255 L 710.4 190" stroke="#a6a6a6" stroke-width="1.6" fill="none"/><path d="M410.7 232.5 C 440 225, 440 196, 471 195.7" stroke="#a6a6a6" stroke-width="1.6" fill="none"/><path d="M655.2 207 C 645 207, 641.5 215, 641.5 232 L 641.5 336" stroke="#a6a6a6" stroke-width="0.9" fill="none"/><path d="M422 248 L 422 420 C 422 438, 428 443.5, 434 443.5" stroke="#a6a6a6" stroke-width="1.8" fill="none"/><path d="M429 333.5 C 438 336, 441 345, 441 360 L 441 410 C 441 422, 446 425.5, 452.6 425.5" stroke="#a6a6a6" stroke-width="1.8" fill="none"/><path d="M447 443.5 L 617.7 443.5" stroke="#a6a6a6" stroke-width="1.7" fill="none"/><path d="M465.7 425.5 L 599.4 425.5" stroke="#a6a6a6" stroke-width="1.7" fill="none"/><path d="M594.4 398.5 C 600 400, 598 415, 599.4 425" stroke="#a6a6a6" stroke-width="1.3" fill="none"/><path d="M649.6 442.5 L 691.4 427" stroke="#a6a6a6" stroke-width="1" fill="none"/><path d="M649.6 444.5 L 728.3 435.5" stroke="#a6a6a6" stroke-width="1.2" fill="none"/><path d="M741.3 434.5 L 898.5 420.5" stroke="#a6a6a6" stroke-width="1.4" fill="none"/><path d="M643 349.5 L 643 400" stroke="#a6a6a6" stroke-width="1.2" fill="none"/><path d="M643 413 L 643 419" stroke="#a6a6a6" stroke-width="1.5" fill="none"/><path d="M643 432 L 643 437" stroke="#a6a6a6" stroke-width="1.5" fill="none"/><path d="M800.6 388.8 L 824 388.8" stroke="#a6a6a6" stroke-width="1.8" fill="none"/><path d="M746.6 414.5 L 770 399.5" stroke="#a6a6a6" stroke-width="0.8" fill="none"/><path d="M668.2 443 L 680 441" stroke="#a6a6a6" stroke-width="1.2" fill="none"/><path d="M428.7 241.5 C 470 241, 470 250, 507.7 250.5" stroke="#f2a22c" stroke-width="2" fill="none"/><path d="M428.7 259.7 C 470 258, 470 251, 507.7 250.5" stroke="#f2a22c" stroke-width="1" fill="none"/><path d="M447 324 C 500 330, 520 350, 562.8 352" stroke="#f2a22c" stroke-width="2" fill="none"/><path d="M539 260 C 552 265, 551 290, 551 320 C 551 345, 556 352, 562.8 352" stroke="#f2a22c" stroke-width="2" fill="none"/><path d="M691.7 204.5 C 682 208, 684 240, 693 275 C 702 310, 712 340, 710 360 C 709 366, 707 370, 704.6 370.5" stroke="#f2a22c" stroke-width="2" fill="none"/><path d="M594 361.5 C 620 361, 635 361.5, 655 361.5" stroke="#f2a22c" stroke-width="2" fill="none"/><path d="M704.6 370.5 C 730 375, 745 396, 770 398" stroke="#f2a22c" stroke-width="2" fill="none"/><rect x="433.5" y="170.5" width="14" height="14" fill="#262626" opacity="0.6"/><rect x="434.0" y="171.0" width="13" height="13" filter="url(#fnoise)"/><rect x="434.0" y="171.0" width="13" height="3" fill="#9e1414"/><rect x="434.0" y="183.3" width="13" height="0.7" fill="#5a1a1a"/><rect x="452.5" y="161.5" width="14" height="14" fill="#262626" opacity="0.6"/><rect x="453.0" y="162.0" width="13" height="13" filter="url(#fnoise)"/><rect x="453.0" y="162.0" width="13" height="3" fill="#9e1414"/><rect x="453.0" y="174.3" width="13" height="0.7" fill="#5a1a1a"/><rect x="452.5" y="179.5" width="14" height="14" fill="#262626" opacity="0.6"/><rect x="453.0" y="180.0" width="13" height="13" filter="url(#fnoise)"/><rect x="453.0" y="180.0" width="13" height="3" fill="#9e1414"/><rect x="453.0" y="192.3" width="13" height="0.7" fill="#5a1a1a"/><rect x="470.5" y="152.5" width="14" height="14" fill="#262626" opacity="0.6"/><rect x="471.0" y="153.0" width="13" height="13" filter="url(#fnoise)"/><rect x="471.0" y="153.0" width="13" height="3" fill="#9e1414"/><rect x="471.0" y="165.3" width="13" height="0.7" fill="#5a1a1a"/><rect x="470.5" y="170.5" width="14" height="14" fill="#262626" opacity="0.6"/><rect x="471.0" y="171.0" width="13" height="13" filter="url(#fnoise)"/><rect x="471.0" y="171.0" width="13" height="3" fill="#9e1414"/><rect x="471.0" y="183.3" width="13" height="0.7" fill="#5a1a1a"/><rect x="470.5" y="189.5" width="14" height="14" fill="#262626" opacity="0.6"/><rect x="471.0" y="190.0" width="13" height="13" filter="url(#fnoise)"/><rect x="471.0" y="190.0" width="13" height="2.6" fill="#c4c4c4" opacity="0.6"/><rect x="488.5" y="161.5" width="14" height="14" fill="#262626" opacity="0.6"/><rect x="489.0" y="162.0" width="13" height="13" filter="url(#fnoise)"/><rect x="489.0" y="162.0" width="13" height="3" fill="#9e1414"/><rect x="489.0" y="174.3" width="13" height="0.7" fill="#5a1a1a"/><rect x="488.5" y="179.5" width="14" height="14" fill="#262626" opacity="0.6"/><rect x="489.0" y="180.0" width="13" height="13" filter="url(#fnoise)"/><rect x="489.0" y="180.0" width="13" height="2.6" fill="#c4c4c4" opacity="0.6"/><rect x="507.5" y="170.5" width="14" height="14" fill="#262626" opacity="0.6"/><rect x="508.0" y="171.0" width="13" height="13" filter="url(#fnoise)"/><rect x="508.0" y="171.0" width="13" height="2.6" fill="#c4c4c4" opacity="0.6"/><rect x="507.5" y="189.5" width="14" height="14" fill="#262626" opacity="0.6"/><rect x="508.0" y="190.0" width="13" height="13" filter="url(#fnoise)"/><rect x="508.0" y="190.0" width="13" height="3" fill="#9e1414"/><rect x="508.0" y="202.3" width="13" height="0.7" fill="#5a1a1a"/><rect x="525.5" y="179.5" width="14" height="14" fill="#262626" opacity="0.6"/><rect x="526.0" y="180.0" width="13" height="13" filter="url(#fnoise)"/><rect x="526.0" y="180.0" width="13" height="3" fill="#9e1414"/><rect x="526.0" y="192.3" width="13" height="0.7" fill="#5a1a1a"/><rect x="543.5" y="161.5" width="14" height="14" fill="#262626" opacity="0.6"/><rect x="544.0" y="162.0" width="13" height="13" filter="url(#fnoise2)"/><rect x="544.0" y="162.0" width="13" height="3" fill="#9e1414"/><rect x="544.0" y="174.3" width="13" height="0.7" fill="#5a1a1a"/><rect x="543.5" y="179.5" width="14" height="14" fill="#262626" opacity="0.6"/><rect x="544.0" y="180.0" width="13" height="13" filter="url(#fnoise)"/><rect x="544.0" y="180.0" width="13" height="3" fill="#9e1414"/><rect x="544.0" y="192.3" width="13" height="0.7" fill="#5a1a1a"/><rect x="562.5" y="161.5" width="14" height="14" fill="#262626" opacity="0.6"/><rect x="563.0" y="162.0" width="13" height="13" filter="url(#fnoise)"/><rect x="563.0" y="162.0" width="13" height="3" fill="#9e1414"/><rect x="563.0" y="174.3" width="13" height="0.7" fill="#5a1a1a"/><rect x="562.5" y="179.5" width="14" height="14" fill="#262626" opacity="0.6"/><rect x="563.0" y="180.0" width="13" height="13" filter="url(#fnoise)"/><rect x="563.0" y="180.0" width="13" height="3" fill="#78a878"/><rect x="580.5" y="170.5" width="14" height="14" fill="#262626" opacity="0.6"/><rect x="581.0" y="171.0" width="13" height="13" filter="url(#flnoise)"/><rect x="581.0" y="171.0" width="13" height="2.6" fill="#c4c4c4" opacity="0.6"/><rect x="599.5" y="170.5" width="14" height="14" fill="#262626" opacity="0.6"/><rect x="600.0" y="171.0" width="13" height="13" fill="#a89f8e"/><rect x="600.0" y="171.0" width="13" height="3" fill="#3c6a24"/><rect x="617.5" y="170.5" width="14" height="14" fill="#262626" opacity="0.6"/><rect x="618.0" y="171.0" width="13" height="13" fill="#a89f8e"/><rect x="618.0" y="171.0" width="13" height="3" fill="#78a878"/><rect x="617.5" y="152.5" width="14" height="14" fill="#262626" opacity="0.6"/><rect x="618.0" y="153.0" width="13" height="13" filter="url(#fnoise)"/><rect x="618.0" y="153.0" width="13" height="3" fill="#9e1414"/><rect x="618.0" y="165.3" width="13" height="0.7" fill="#5a1a1a"/><rect x="617.5" y="189.5" width="14" height="14" fill="#262626" opacity="0.6"/><rect x="618.0" y="190.0" width="13" height="13" filter="url(#fnoise)"/><rect x="618.0" y="190.0" width="13" height="3" fill="#9e1414"/><rect x="618.0" y="202.3" width="13" height="0.7" fill="#5a1a1a"/><rect x="635.5" y="161.5" width="14" height="14" fill="#262626" opacity="0.6"/><rect x="636.0" y="162.0" width="13" height="13" fill="#5a8a3a"/><rect x="636.0" y="162.0" width="13" height="3" fill="#3c6a24"/><rect x="654.5" y="161.5" width="14" height="14" fill="#262626" opacity="0.6"/><rect x="655.0" y="162.0" width="13" height="13" fill="#5a8a3a"/><rect x="655.0" y="162.0" width="13" height="3" fill="#3c6a24"/><rect x="635.5" y="179.5" width="14" height="14" fill="#262626" opacity="0.6"/><rect x="636.0" y="180.0" width="13" height="13" fill="#a89f8e"/><rect x="636.0" y="180.0" width="13" height="3" fill="#9e1414"/><rect x="636.0" y="192.3" width="13" height="0.7" fill="#5a1a1a"/><rect x="654.5" y="179.5" width="14" height="14" fill="#262626" opacity="0.6"/><rect x="655.0" y="180.0" width="13" height="13" fill="#a89f8e"/><rect x="655.0" y="180.0" width="13" height="3" fill="#78a878"/><rect x="654.5" y="198.5" width="14" height="20" fill="#262626" opacity="0.6"/><rect x="655.0" y="199.0" width="13" height="19" fill="#9e1414"/><rect x="655.0" y="202.0" width="13" height="13.0" filter="url(#fblack2)"/><rect x="654.4" y="203.0" width="1.3" height="1.3" fill="#f0a030"/><rect x="654.4" y="206.5" width="1.3" height="1.3" fill="#f0a030"/><rect x="654.4" y="210.0" width="1.3" height="1.3" fill="#f0a030"/><rect x="654.4" y="213.5" width="1.3" height="1.3" fill="#f0a030"/><rect x="672.5" y="179.5" width="14" height="14" fill="#262626" opacity="0.6"/><rect x="673.0" y="180.0" width="13" height="13" fill="#a89f8e"/><rect x="673.0" y="180.0" width="13" height="2.6" fill="#c4c4c4" opacity="0.6"/><rect x="690.5" y="170.5" width="14" height="14" fill="#262626" opacity="0.6"/><rect x="691.0" y="171.0" width="13" height="13" fill="#a89f8e"/><rect x="691.0" y="171.0" width="13" height="3" fill="#78a878"/><rect x="709.5" y="179.5" width="14" height="14" fill="#262626" opacity="0.6"/><rect x="710.0" y="180.0" width="13" height="13" fill="#a89f8e"/><rect x="710.0" y="180.0" width="13" height="2.6" fill="#c4c4c4" opacity="0.6"/><rect x="690.5" y="198.5" width="14" height="14" fill="#262626" opacity="0.6"/><rect x="691.0" y="199.0" width="13" height="13" fill="#8c8c8c"/><rect x="691.0" y="199.0" width="13" height="3" fill="#9e1414"/><rect x="691.0" y="211.3" width="13" height="0.7" fill="#5a1a1a"/><rect x="709.5" y="198.5" width="14" height="14" fill="#262626" opacity="0.6"/><rect x="710.0" y="199.0" width="13" height="13" fill="#8c8c8c"/><rect x="710.0" y="199.0" width="13" height="3" fill="#3c6a24"/><rect x="727.5" y="189.5" width="14" height="14" fill="#262626" opacity="0.6"/><rect x="728.0" y="190.0" width="13" height="13" fill="#a89f8e"/><rect x="728.0" y="190.0" width="13" height="2.6" fill="#c4c4c4" opacity="0.6"/><rect x="745.5" y="189.5" width="14" height="14" fill="#262626" opacity="0.6"/><rect x="746.0" y="190.0" width="13" height="13" fill="#a89f8e"/><rect x="746.0" y="190.0" width="13" height="2.6" fill="#c4c4c4" opacity="0.6"/><rect x="250.5" y="244.5" width="14" height="14" fill="#262626" opacity="0.6"/><rect x="251.0" y="245.0" width="13" height="13" filter="url(#fnoise)"/><rect x="251.0" y="245.0" width="13" height="3" fill="#9e1414"/><rect x="251.0" y="257.3" width="13" height="0.7" fill="#5a1a1a"/><rect x="268.5" y="244.5" width="14" height="14" fill="#262626" opacity="0.6"/><rect x="269.0" y="245.0" width="13" height="13" filter="url(#fdark)"/><rect x="269.0" y="245.0" width="13" height="3" fill="#78a878"/><rect x="286.5" y="244.5" width="14" height="14" fill="#262626" opacity="0.6"/><rect x="287.0" y="245.0" width="13" height="13" filter="url(#fdark)"/><rect x="287.0" y="245.0" width="13" height="3" fill="#8a8468"/><rect x="286.5" y="225.5" width="14" height="14" fill="#262626" opacity="0.6"/><rect x="287.0" y="226.0" width="13" height="13" filter="url(#fnoise)"/><rect x="287.0" y="226.0" width="13" height="3" fill="#9e1414"/><rect x="287.0" y="238.3" width="13" height="0.7" fill="#5a1a1a"/><rect x="305.5" y="235.5" width="14" height="14" fill="#262626" opacity="0.6"/><rect x="306.0" y="236.0" width="13" height="13" filter="url(#fnoise)"/><rect x="306.0" y="236.0" width="13" height="3" fill="#4a8494"/><rect x="323.5" y="244.5" width="14" height="14" fill="#262626" opacity="0.6"/><rect x="324.0" y="245.0" width="13" height="13" filter="url(#fnoise)"/><rect x="324.0" y="245.0" width="13" height="3" fill="#9e1414"/><rect x="324.0" y="257.3" width="13" height="0.7" fill="#5a1a1a"/><rect x="341.5" y="235.5" width="14" height="14" fill="#262626" opacity="0.6"/><rect x="342.0" y="236.0" width="13" height="13" filter="url(#fnoise)"/><rect x="342.0" y="236.0" width="13" height="2.6" fill="#c4c4c4" opacity="0.6"/><rect x="341.5" y="253.5" width="14" height="14" fill="#262626" opacity="0.6"/><rect x="342.0" y="254.0" width="13" height="13" filter="url(#fnoise)"/><rect x="342.0" y="254.0" width="13" height="3" fill="#9e1414"/><rect x="342.0" y="266.3" width="13" height="0.7" fill="#5a1a1a"/><rect x="360.5" y="244.5" width="14" height="14" fill="#262626" opacity="0.6"/><rect x="361.0" y="245.0" width="13" height="13" filter="url(#fnoise)"/><rect x="361.0" y="245.0" width="13" height="3" fill="#9e1414"/><rect x="361.0" y="257.3" width="13" height="0.7" fill="#5a1a1a"/><rect x="378.5" y="235.5" width="14" height="14" fill="#262626" opacity="0.6"/><rect x="379.0" y="236.0" width="13" height="13" filter="url(#fnoise)"/><rect x="379.0" y="236.0" width="13" height="3" fill="#9e1414"/><rect x="379.0" y="248.3" width="13" height="0.7" fill="#5a1a1a"/><rect x="397.5" y="225.5" width="14" height="14" fill="#262626" opacity="0.6"/><rect x="398.0" y="226.0" width="13" height="13" filter="url(#fwhite)"/><rect x="398.0" y="226.0" width="13" height="3" fill="#78a878"/><rect x="415.5" y="235.5" width="14" height="14" fill="#262626" opacity="0.6"/><rect x="416.0" y="236.0" width="13" height="13" fill="#7b7bf2"/><rect x="416.0" y="236.0" width="13" height="2" fill="#6e6ee0"/><rect x="415.5" y="253.5" width="14" height="14" fill="#262626" opacity="0.6"/><rect x="416.0" y="254.0" width="13" height="13" fill="#7b7bf2"/><rect x="416.0" y="254.0" width="13" height="2" fill="#6e6ee0"/><rect x="433.5" y="262.5" width="14" height="14" fill="#262626" opacity="0.6"/><rect x="434.0" y="263.0" width="13" height="13" fill="#8c8c8c"/><rect x="434.0" y="263.0" width="13" height="3" fill="#9e1414"/><rect x="434.0" y="275.3" width="13" height="0.7" fill="#5a1a1a"/><rect x="415.5" y="271.5" width="14" height="14" fill="#262626" opacity="0.6"/><rect x="416.0" y="272.0" width="13" height="13" filter="url(#fwb)"/><rect x="416.0" y="272.0" width="13" height="3" fill="#9e1414"/><rect x="416.0" y="284.3" width="13" height="0.7" fill="#5a1a1a"/><rect x="415.5" y="290.5" width="14" height="14" fill="#262626" opacity="0.6"/><rect x="416.0" y="291.0" width="13" height="13" filter="url(#fdark)"/><rect x="416.0" y="291.0" width="13" height="3" fill="#9e1414"/><rect x="416.0" y="303.3" width="13" height="0.7" fill="#5a1a1a"/><rect x="397.5" y="280.5" width="14" height="14" fill="#262626" opacity="0.6"/><rect x="398.0" y="281.0" width="13" height="13" filter="url(#fnoise)"/><rect x="398.0" y="281.0" width="13" height="3" fill="#9e1414"/><rect x="398.0" y="293.3" width="13" height="0.7" fill="#5a1a1a"/><rect x="433.5" y="280.5" width="14" height="14" fill="#262626" opacity="0.6"/><rect x="434.0" y="281.0" width="13" height="13" filter="url(#fdark)"/><rect x="434.0" y="281.0" width="13" height="2.6" fill="#c4c4c4" opacity="0.6"/><rect x="452.5" y="271.5" width="14" height="14" fill="#262626" opacity="0.6"/><rect x="453.0" y="272.0" width="13" height="13" fill="#0a0a0a"/><rect x="453.0" y="272.0" width="13" height="3" fill="#6a1010"/><rect x="470.5" y="262.5" width="14" height="14" fill="#262626" opacity="0.6"/><rect x="471.0" y="263.0" width="13" height="13" filter="url(#fwhite)"/><rect x="471.0" y="263.0" width="13" height="3" fill="#9e1414"/><rect x="471.0" y="275.3" width="13" height="0.7" fill="#5a1a1a"/><rect x="470.5" y="280.5" width="14" height="14" fill="#262626" opacity="0.6"/><rect x="471.0" y="281.0" width="13" height="13" filter="url(#fnoise)"/><rect x="471.0" y="281.0" width="13" height="3" fill="#9e1414"/><rect x="471.0" y="293.3" width="13" height="0.7" fill="#5a1a1a"/><rect x="488.5" y="271.5" width="14" height="14" fill="#262626" opacity="0.6"/><rect x="489.0" y="272.0" width="13" height="13" filter="url(#fwhite)"/><rect x="489.0" y="272.0" width="13" height="3" fill="#9e1414"/><rect x="489.0" y="284.3" width="13" height="0.7" fill="#5a1a1a"/><rect x="507.5" y="262.5" width="14" height="14" fill="#262626" opacity="0.6"/><rect x="508.0" y="263.0" width="13" height="13" fill="#7b7bf2"/><rect x="508.0" y="263.0" width="13" height="2" fill="#6e6ee0"/><rect x="507.5" y="244.5" width="14" height="14" fill="#262626" opacity="0.6"/><rect x="508.0" y="245.0" width="13" height="13" fill="#7b7bf2"/><rect x="508.0" y="245.0" width="13" height="2" fill="#6e6ee0"/><rect x="525.5" y="253.5" width="14" height="14" fill="#262626" opacity="0.6"/><rect x="526.0" y="254.0" width="13" height="13" fill="#7b7bf2"/><rect x="526.0" y="254.0" width="13" height="3" fill="#9e1414"/><rect x="286.5" y="280.5" width="14" height="14" fill="#262626" opacity="0.6"/><rect x="287.0" y="281.0" width="13" height="13" filter="url(#fwhite)"/><rect x="287.0" y="281.0" width="13" height="3" fill="#9e1414"/><rect x="287.0" y="293.3" width="13" height="0.7" fill="#5a1a1a"/><rect x="305.5" y="280.5" width="14" height="14" fill="#262626" opacity="0.6"/><rect x="306.0" y="281.0" width="13" height="13" filter="url(#fwhite)"/><rect x="306.0" y="281.0" width="13" height="3" fill="#9e1414"/><rect x="306.0" y="293.3" width="13" height="0.7" fill="#5a1a1a"/><rect x="323.5" y="290.5" width="14" height="14" fill="#262626" opacity="0.6"/><rect x="324.0" y="291.0" width="13" height="13" filter="url(#fwhite)"/><rect x="324.0" y="291.0" width="13" height="3" fill="#4a8494"/><rect x="305.5" y="299.5" width="14" height="14" fill="#262626" opacity="0.6"/><rect x="306.0" y="300.0" width="13" height="13" filter="url(#fnoise)"/><rect x="306.0" y="300.0" width="13" height="3" fill="#9e1414"/><rect x="306.0" y="312.3" width="13" height="0.7" fill="#5a1a1a"/><rect x="323.5" y="308.5" width="14" height="14" fill="#262626" opacity="0.6"/><rect x="324.0" y="309.0" width="13" height="13" filter="url(#fnoise)"/><rect x="324.0" y="309.0" width="13" height="3" fill="#4e5c9e"/><rect x="341.5" y="299.5" width="14" height="14" fill="#262626" opacity="0.6"/><rect x="342.0" y="300.0" width="13" height="13" filter="url(#fwhite)"/><rect x="342.0" y="300.0" width="13" height="3" fill="#4a8494"/><rect x="360.5" y="299.5" width="14" height="14" fill="#262626" opacity="0.6"/><rect x="361.0" y="300.0" width="13" height="13" filter="url(#fwhite)"/><rect x="361.0" y="300.0" width="13" height="2.6" fill="#c4c4c4" opacity="0.6"/><rect x="341.5" y="317.5" width="14" height="14" fill="#262626" opacity="0.6"/><rect x="342.0" y="318.0" width="13" height="13" filter="url(#fwb)"/><rect x="342.0" y="318.0" width="13" height="3" fill="#9e1414"/><rect x="342.0" y="330.3" width="13" height="0.7" fill="#5a1a1a"/><rect x="323.5" y="326.5" width="14" height="14" fill="#262626" opacity="0.6"/><rect x="324.0" y="327.0" width="13" height="13" filter="url(#fnoise)"/><rect x="324.0" y="327.0" width="13" height="3" fill="#9e1414"/><rect x="324.0" y="339.3" width="13" height="0.7" fill="#5a1a1a"/><rect x="378.5" y="308.5" width="14" height="14" fill="#262626" opacity="0.6"/><rect x="379.0" y="309.0" width="13" height="13" filter="url(#fwhite)"/><rect x="379.0" y="309.0" width="13" height="3" fill="#4a8494"/><rect x="397.5" y="317.5" width="14" height="14" fill="#262626" opacity="0.6"/><rect x="398.0" y="318.0" width="13" height="13" filter="url(#fwhite)"/><rect x="398.0" y="318.0" width="13" height="3" fill="#9e1414"/><rect x="398.0" y="330.3" width="13" height="0.7" fill="#5a1a1a"/><rect x="378.5" y="326.5" width="14" height="14" fill="#262626" opacity="0.6"/><rect x="379.0" y="327.0" width="13" height="13" filter="url(#fnoise)"/><rect x="379.0" y="327.0" width="13" height="3" fill="#9e1414"/><rect x="379.0" y="339.3" width="13" height="0.7" fill="#5a1a1a"/><rect x="397.5" y="336.5" width="14" height="14" fill="#262626" opacity="0.6"/><rect x="398.0" y="337.0" width="13" height="13" filter="url(#flnoise)"/><rect x="398.0" y="337.0" width="13" height="3" fill="#4e5c9e"/><rect x="378.5" y="345.5" width="14" height="14" fill="#262626" opacity="0.6"/><rect x="379.0" y="346.0" width="13" height="13" filter="url(#fnoise)"/><rect x="379.0" y="346.0" width="13" height="3" fill="#9e1414"/><rect x="379.0" y="358.3" width="13" height="0.7" fill="#5a1a1a"/><rect x="415.5" y="326.5" width="14" height="14" fill="#262626" opacity="0.6"/><rect x="416.0" y="327.0" width="13" height="13" filter="url(#fwhite)"/><rect x="416.0" y="327.0" width="13" height="3" fill="#9e1414"/><rect x="416.0" y="339.3" width="13" height="0.7" fill="#5a1a1a"/><rect x="433.5" y="317.5" width="14" height="14" fill="#262626" opacity="0.6"/><rect x="434.0" y="318.0" width="13" height="13" fill="#7b7bf2"/><rect x="434.0" y="318.0" width="13" height="2" fill="#6e6ee0"/><rect x="452.5" y="336.5" width="14" height="33" fill="#262626" opacity="0.6"/><rect x="453.0" y="337.0" width="13" height="32" fill="#9e1414"/><rect x="453.0" y="347.5" width="13" height="11.0" fill="#050505"/><rect x="452.4" y="340.0" width="1.3" height="1.3" fill="#dddddd"/><rect x="452.4" y="343.8" width="1.3" height="1.3" fill="#dddddd"/><rect x="452.4" y="347.6" width="1.3" height="1.3" fill="#dddddd"/><rect x="452.4" y="351.4" width="1.3" height="1.3" fill="#dddddd"/><rect x="452.4" y="355.2" width="1.3" height="1.3" fill="#f0a030"/><rect x="452.4" y="359.0" width="1.3" height="1.3" fill="#dddddd"/><rect x="452.4" y="362.8" width="1.3" height="1.3" fill="#dddddd"/><rect x="470.5" y="345.5" width="14" height="14" fill="#262626" opacity="0.6"/><rect x="471.0" y="346.0" width="13" height="13" filter="url(#fwhite)"/><rect x="471.0" y="346.0" width="13" height="3" fill="#9e1414"/><rect x="471.0" y="358.3" width="13" height="0.7" fill="#5a1a1a"/><rect x="488.5" y="345.5" width="14" height="14" fill="#262626" opacity="0.6"/><rect x="489.0" y="346.0" width="13" height="13" filter="url(#fwhite)"/><rect x="489.0" y="346.0" width="13" height="3" fill="#8a8468"/><rect x="507.5" y="354.5" width="14" height="14" fill="#262626" opacity="0.6"/><rect x="508.0" y="355.0" width="13" height="13" filter="url(#fwhite)"/><rect x="508.0" y="355.0" width="13" height="3" fill="#4a8494"/><rect x="488.5" y="363.5" width="14" height="14" fill="#262626" opacity="0.6"/><rect x="489.0" y="364.0" width="13" height="13" filter="url(#fnoise)"/><rect x="489.0" y="364.0" width="13" height="3" fill="#9e1414"/><rect x="489.0" y="376.3" width="13" height="0.7" fill="#5a1a1a"/><rect x="507.5" y="372.5" width="14" height="14" fill="#262626" opacity="0.6"/><rect x="508.0" y="373.0" width="13" height="13" filter="url(#fgnoise)"/><rect x="508.0" y="373.0" width="13" height="3" fill="#9e1414"/><rect x="508.0" y="385.3" width="13" height="0.7" fill="#5a1a1a"/><rect x="525.5" y="363.5" width="14" height="14" fill="#262626" opacity="0.6"/><rect x="526.0" y="364.0" width="13" height="13" filter="url(#fwhite)"/><rect x="526.0" y="364.0" width="13" height="3" fill="#9e1414"/><rect x="526.0" y="376.3" width="13" height="0.7" fill="#5a1a1a"/><rect x="488.5" y="381.5" width="14" height="33" fill="#262626" opacity="0.6"/><rect x="489.0" y="382.0" width="13" height="32" fill="#9e1414"/><rect x="489.0" y="392.5" width="13" height="11.0" fill="#050505"/><rect x="488.4" y="385.0" width="1.3" height="1.3" fill="#dddddd"/><rect x="488.4" y="388.8" width="1.3" height="1.3" fill="#dddddd"/><rect x="488.4" y="392.6" width="1.3" height="1.3" fill="#dddddd"/><rect x="488.4" y="396.4" width="1.3" height="1.3" fill="#dddddd"/><rect x="488.4" y="400.2" width="1.3" height="1.3" fill="#f0a030"/><rect x="488.4" y="404.0" width="1.3" height="1.3" fill="#dddddd"/><rect x="488.4" y="407.8" width="1.3" height="1.3" fill="#dddddd"/><rect x="525.5" y="381.5" width="14" height="14" fill="#262626" opacity="0.6"/><rect x="526.0" y="382.0" width="13" height="13" filter="url(#fwhite)"/><rect x="526.0" y="382.0" width="13" height="3" fill="#9e1414"/><rect x="526.0" y="394.3" width="13" height="0.7" fill="#5a1a1a"/><rect x="543.5" y="372.5" width="14" height="14" fill="#262626" opacity="0.6"/><rect x="544.0" y="373.0" width="13" height="13" filter="url(#fwhite)"/><rect x="544.0" y="373.0" width="13" height="2.6" fill="#c4c4c4" opacity="0.6"/><rect x="562.5" y="345.5" width="14" height="14" fill="#262626" opacity="0.6"/><rect x="563.0" y="346.0" width="13" height="13" fill="#7b7bf2"/><rect x="563.0" y="346.0" width="13" height="3" fill="#9e1414"/><rect x="562.5" y="363.5" width="14" height="14" fill="#262626" opacity="0.6"/><rect x="563.0" y="364.0" width="13" height="13" fill="#7b7bf2"/><rect x="563.0" y="364.0" width="13" height="2" fill="#6e6ee0"/><rect x="580.5" y="354.5" width="14" height="14" fill="#262626" opacity="0.6"/><rect x="581.0" y="355.0" width="13" height="13" fill="#7b7bf2"/><rect x="581.0" y="355.0" width="13" height="3" fill="#9e1414"/><rect x="562.5" y="381.5" width="14" height="14" fill="#262626" opacity="0.6"/><rect x="563.0" y="382.0" width="13" height="13" filter="url(#fwhite)"/><rect x="563.0" y="382.0" width="13" height="3" fill="#9e1414"/><rect x="563.0" y="394.3" width="13" height="0.7" fill="#5a1a1a"/><rect x="562.5" y="400.5" width="14" height="14" fill="#262626" opacity="0.6"/><rect x="563.0" y="401.0" width="13" height="13" filter="url(#fwhite)"/><rect x="563.0" y="401.0" width="13" height="3" fill="#9e1414"/><rect x="563.0" y="413.3" width="13" height="0.7" fill="#5a1a1a"/><rect x="580.5" y="391.5" width="14" height="14" fill="#262626" opacity="0.6"/><rect x="581.0" y="392.0" width="13" height="13" filter="url(#fwhite)"/><rect x="581.0" y="392.0" width="13" height="2.6" fill="#c4c4c4" opacity="0.6"/><rect x="452.5" y="418.5" width="14" height="14" fill="#262626" opacity="0.6"/><rect x="453.0" y="419.0" width="13" height="13" filter="url(#fwhite)"/><rect x="453.0" y="419.0" width="13" height="3" fill="#9e1414"/><rect x="453.0" y="431.3" width="13" height="0.7" fill="#5a1a1a"/><rect x="599.5" y="418.5" width="14" height="14" fill="#262626" opacity="0.6"/><rect x="600.0" y="419.0" width="13" height="13" filter="url(#fwhite)"/><rect x="600.0" y="419.0" width="13" height="2.6" fill="#c4c4c4" opacity="0.6"/><rect x="580.5" y="317.5" width="14" height="14" fill="#262626" opacity="0.6"/><rect x="581.0" y="318.0" width="13" height="13" filter="url(#fnoise)"/><rect x="581.0" y="318.0" width="13" height="3" fill="#9e1414"/><rect x="581.0" y="330.3" width="13" height="0.7" fill="#5a1a1a"/><rect x="580.5" y="336.5" width="14" height="14" fill="#262626" opacity="0.6"/><rect x="581.0" y="337.0" width="13" height="13" filter="url(#fgnoise)"/><rect x="581.0" y="337.0" width="13" height="3" fill="#9e1414"/><rect x="581.0" y="349.3" width="13" height="0.7" fill="#5a1a1a"/><rect x="599.5" y="326.5" width="14" height="14" fill="#262626" opacity="0.6"/><rect x="600.0" y="327.0" width="13" height="13" filter="url(#fnoise)"/><rect x="600.0" y="327.0" width="13" height="3" fill="#9e1414"/><rect x="600.0" y="339.3" width="13" height="0.7" fill="#5a1a1a"/><rect x="617.5" y="336.5" width="14" height="14" fill="#262626" opacity="0.6"/><rect x="618.0" y="337.0" width="13" height="13" filter="url(#fwhite)"/><rect x="618.0" y="337.0" width="13" height="3" fill="#9e1414"/><rect x="618.0" y="349.3" width="13" height="0.7" fill="#5a1a1a"/><rect x="635.5" y="336.5" width="14" height="14" fill="#262626" opacity="0.6"/><rect x="636.0" y="337.0" width="13" height="13" fill="#7b7bf2"/><rect x="636.0" y="337.0" width="13" height="2" fill="#6e6ee0"/><rect x="617.5" y="372.5" width="14" height="14" fill="#262626" opacity="0.6"/><rect x="618.0" y="373.0" width="13" height="13" filter="url(#fblack2)"/><rect x="618.0" y="373.0" width="13" height="3" fill="#9e1414"/><rect x="618.0" y="385.3" width="13" height="0.7" fill="#5a1a1a"/><rect x="635.5" y="372.5" width="14" height="14" fill="#262626" opacity="0.6"/><rect x="636.0" y="373.0" width="13" height="13" filter="url(#fwhite)"/><rect x="636.0" y="373.0" width="13" height="3" fill="#9e1414"/><rect x="636.0" y="385.3" width="13" height="0.7" fill="#5a1a1a"/><rect x="617.5" y="391.5" width="14" height="14" fill="#262626" opacity="0.6"/><rect x="618.0" y="392.0" width="13" height="13" filter="url(#fwavy)"/><rect x="618.0" y="392.0" width="13" height="3" fill="#9e1414"/><rect x="618.0" y="404.3" width="13" height="0.7" fill="#5a1a1a"/><rect x="635.5" y="400.5" width="14" height="14" fill="#262626" opacity="0.6"/><rect x="636.0" y="401.0" width="13" height="13" filter="url(#fwavy)"/><rect x="636.0" y="401.0" width="13" height="2.6" fill="#c4c4c4" opacity="0.6"/><rect x="617.5" y="409.5" width="14" height="14" fill="#262626" opacity="0.6"/><rect x="618.0" y="410.0" width="13" height="13" filter="url(#fwavy)"/><rect x="618.0" y="410.0" width="13" height="3" fill="#9e1414"/><rect x="618.0" y="422.3" width="13" height="0.7" fill="#5a1a1a"/><rect x="635.5" y="418.5" width="14" height="14" fill="#262626" opacity="0.6"/><rect x="636.0" y="419.0" width="13" height="13" filter="url(#fnoise)"/><rect x="636.0" y="419.0" width="13" height="3" fill="#9e1414"/><rect x="636.0" y="431.3" width="13" height="0.7" fill="#5a1a1a"/><rect x="433.5" y="437.5" width="14" height="14" fill="#262626" opacity="0.6"/><rect x="434.0" y="438.0" width="13" height="13" filter="url(#fnoise)"/><rect x="434.0" y="438.0" width="13" height="3" fill="#9e1414"/><rect x="434.0" y="450.3" width="13" height="0.7" fill="#5a1a1a"/><rect x="617.5" y="437.5" width="14" height="14" fill="#262626" opacity="0.6"/><rect x="618.0" y="438.0" width="13" height="13" filter="url(#fwhite)"/><rect x="618.0" y="438.0" width="13" height="2.6" fill="#c4c4c4" opacity="0.6"/><rect x="635.5" y="437.5" width="14" height="14" fill="#262626" opacity="0.6"/><rect x="636.0" y="438.0" width="13" height="13" filter="url(#fwhite)"/><rect x="636.0" y="438.0" width="13" height="3" fill="#8a88aa"/><rect x="654.5" y="354.5" width="14" height="14" fill="#262626" opacity="0.6"/><rect x="655.0" y="355.0" width="13" height="13" fill="#7b7bf2"/><rect x="655.0" y="355.0" width="13" height="3" fill="#9e1414"/><rect x="654.5" y="372.5" width="14" height="14" fill="#262626" opacity="0.6"/><rect x="655.0" y="373.0" width="13" height="13" fill="#7b7bf2"/><rect x="655.0" y="373.0" width="13" height="2" fill="#6e6ee0"/><rect x="690.5" y="363.5" width="14" height="14" fill="#262626" opacity="0.6"/><rect x="691.0" y="364.0" width="13" height="13" fill="#7b7bf2"/><rect x="691.0" y="364.0" width="13" height="3" fill="#9e1414"/><rect x="654.5" y="391.5" width="14" height="14" fill="#262626" opacity="0.6"/><rect x="655.0" y="392.0" width="13" height="13" filter="url(#fnoise)"/><rect x="655.0" y="392.0" width="13" height="3" fill="#9e1414"/><rect x="655.0" y="404.3" width="13" height="0.7" fill="#5a1a1a"/><rect x="654.5" y="409.5" width="14" height="14" fill="#262626" opacity="0.6"/><rect x="655.0" y="410.0" width="13" height="13" filter="url(#fwavy)"/><rect x="655.0" y="410.0" width="13" height="3" fill="#4a8494"/><rect x="672.5" y="400.5" width="14" height="14" fill="#262626" opacity="0.6"/><rect x="673.0" y="401.0" width="13" height="13" filter="url(#flnoise)"/><rect x="673.0" y="401.0" width="13" height="2.6" fill="#c4c4c4" opacity="0.6"/><rect x="690.5" y="400.5" width="14" height="14" fill="#262626" opacity="0.6"/><rect x="691.0" y="401.0" width="13" height="13" filter="url(#fdark)"/><rect x="691.0" y="401.0" width="13" height="3" fill="#9e1414"/><rect x="691.0" y="413.3" width="13" height="0.7" fill="#5a1a1a"/><rect x="709.5" y="409.5" width="14" height="14" fill="#262626" opacity="0.6"/><rect x="710.0" y="410.0" width="13" height="13" filter="url(#fdark)"/><rect x="710.0" y="410.0" width="13" height="3" fill="#9e1414"/><rect x="710.0" y="422.3" width="13" height="0.7" fill="#5a1a1a"/><rect x="690.5" y="418.5" width="14" height="14" fill="#262626" opacity="0.6"/><rect x="691.0" y="419.0" width="13" height="13" filter="url(#fnoise)"/><rect x="691.0" y="419.0" width="13" height="3" fill="#9e1414"/><rect x="691.0" y="431.3" width="13" height="0.7" fill="#5a1a1a"/><rect x="727.5" y="391.5" width="14" height="14" fill="#262626" opacity="0.6"/><rect x="728.0" y="392.0" width="13" height="13" fill="#7b7bf2"/><rect x="728.0" y="392.0" width="13" height="3" fill="#9e1414"/><rect x="727.5" y="409.5" width="14" height="14" fill="#262626" opacity="0.6"/><rect x="728.0" y="410.0" width="13" height="13" fill="#7b7bf2"/><rect x="728.0" y="410.0" width="13" height="2" fill="#6e6ee0"/><rect x="745.5" y="409.5" width="14" height="14" fill="#262626" opacity="0.6"/><rect x="746.0" y="410.0" width="13" height="13" fill="#7b7bf2"/><rect x="746.0" y="410.0" width="13" height="3" fill="#9e1414"/><rect x="727.5" y="427.5" width="14" height="14" fill="#262626" opacity="0.6"/><rect x="728.0" y="428.0" width="13" height="13" fill="#0a0a0a"/><rect x="728.0" y="428.0" width="13" height="3" fill="#9e1414"/><rect x="728.0" y="440.3" width="13" height="0.7" fill="#5a1a1a"/><rect x="768.5" y="391.5" width="14" height="14" fill="#262626" opacity="0.6"/><rect x="769.0" y="392.0" width="13" height="13" fill="#7b7bf2"/><rect x="769.0" y="392.0" width="13" height="3" fill="#9e1414"/><rect x="787.5" y="345.5" width="14" height="14" fill="#262626" opacity="0.6"/><rect x="788.0" y="346.0" width="13" height="13" filter="url(#fnoise)"/><rect x="788.0" y="346.0" width="13" height="3" fill="#9e1414"/><rect x="788.0" y="358.3" width="13" height="0.7" fill="#5a1a1a"/><rect x="805.5" y="354.5" width="14" height="14" fill="#262626" opacity="0.6"/><rect x="806.0" y="355.0" width="13" height="13" filter="url(#fnoise)"/><rect x="806.0" y="355.0" width="13" height="3" fill="#9e1414"/><rect x="806.0" y="367.3" width="13" height="0.7" fill="#5a1a1a"/><rect x="823.5" y="363.5" width="14" height="14" fill="#262626" opacity="0.6"/><rect x="824.0" y="364.0" width="13" height="13" filter="url(#flnoise)"/><rect x="824.0" y="364.0" width="13" height="2.6" fill="#c4c4c4" opacity="0.6"/><rect x="805.5" y="372.5" width="14" height="14" fill="#262626" opacity="0.6"/><rect x="806.0" y="373.0" width="13" height="13" filter="url(#flnoise)"/><rect x="806.0" y="373.0" width="13" height="3" fill="#78a878"/><rect x="787.5" y="381.5" width="14" height="14" fill="#262626" opacity="0.6"/><rect x="788.0" y="382.0" width="13" height="13" filter="url(#fgnoise)"/><rect x="788.0" y="382.0" width="13" height="3" fill="#9e1414"/><rect x="788.0" y="394.3" width="13" height="0.7" fill="#5a1a1a"/><rect x="823.5" y="381.5" width="14" height="14" fill="#262626" opacity="0.6"/><rect x="824.0" y="382.0" width="13" height="13" filter="url(#fgnoise)"/><rect x="824.0" y="382.0" width="13" height="2.6" fill="#c4c4c4" opacity="0.6"/><rect x="805.5" y="391.5" width="14" height="14" fill="#262626" opacity="0.6"/><rect x="806.0" y="392.0" width="13" height="13" fill="#0a0a0a"/><rect x="806.0" y="392.0" width="13" height="3" fill="#9e1414"/><rect x="806.0" y="404.3" width="13" height="0.7" fill="#5a1a1a"/><rect x="787.5" y="400.5" width="14" height="14" fill="#262626" opacity="0.6"/><rect x="788.0" y="401.0" width="13" height="13" fill="#7b7bf2"/><rect x="788.0" y="401.0" width="13" height="3" fill="#9e1414"/><rect x="805.5" y="409.5" width="14" height="14" fill="#262626" opacity="0.6"/><rect x="806.0" y="410.0" width="13" height="13" fill="#7b7bf2"/><rect x="806.0" y="410.0" width="13" height="3" fill="#8a88aa"/><rect x="842.5" y="372.5" width="14" height="14" fill="#262626" opacity="0.6"/><rect x="843.0" y="373.0" width="13" height="13" filter="url(#flnoise)"/><rect x="843.0" y="373.0" width="13" height="2.6" fill="#c4c4c4" opacity="0.6"/><rect x="842.5" y="391.5" width="14" height="14" fill="#262626" opacity="0.6"/><rect x="843.0" y="392.0" width="13" height="13" fill="#0a0a0a"/><rect x="843.0" y="392.0" width="13" height="3" fill="#9e1414"/><rect x="843.0" y="404.3" width="13" height="0.7" fill="#5a1a1a"/><rect x="860.5" y="381.5" width="14" height="14" fill="#262626" opacity="0.6"/><rect x="861.0" y="382.0" width="13" height="13" filter="url(#flnoise)"/><rect x="861.0" y="382.0" width="13" height="2.6" fill="#c4c4c4" opacity="0.6"/><rect x="860.5" y="400.5" width="14" height="14" fill="#262626" opacity="0.6"/><rect x="861.0" y="401.0" width="13" height="13" filter="url(#fnoise)"/><rect x="861.0" y="401.0" width="13" height="3" fill="#9e1414"/><rect x="861.0" y="413.3" width="13" height="0.7" fill="#5a1a1a"/><rect x="879.5" y="391.5" width="14" height="14" fill="#262626" opacity="0.6"/><rect x="880.0" y="392.0" width="13" height="13" filter="url(#flnoise)"/><rect x="880.0" y="392.0" width="13" height="2.6" fill="#c4c4c4" opacity="0.6"/><rect x="897.5" y="381.5" width="14" height="14" fill="#262626" opacity="0.6"/><rect x="898.0" y="382.0" width="13" height="13" filter="url(#flnoise)"/><rect x="898.0" y="382.0" width="13" height="3" fill="#8a88aa"/><rect x="897.5" y="400.5" width="14" height="14" fill="#262626" opacity="0.6"/><rect x="898.0" y="401.0" width="13" height="13" filter="url(#fgnoise)"/><rect x="898.0" y="401.0" width="13" height="3" fill="#9e1414"/><rect x="898.0" y="413.3" width="13" height="0.7" fill="#5a1a1a"/><rect x="897.5" y="418.5" width="14" height="14" fill="#262626" opacity="0.6"/><rect x="898.0" y="419.0" width="13" height="13" fill="#0a0a0a"/><rect x="898.0" y="419.0" width="13" height="3" fill="#6a1010"/><rect x="915.5" y="409.5" width="14" height="17" fill="#262626" opacity="0.6"/><rect x="916.0" y="410.0" width="13" height="16" fill="url(#chk)"/><rect x="916.0" y="424.0" width="13" height="2" fill="#9e1414"/><rect x="916.0" y="410.0" width="13" height="3" fill="#9e1414"/><rect x="934.5" y="409.5" width="14" height="15.5" fill="#262626" opacity="0.6"/><rect x="935.0" y="410.0" width="13" height="14.5" fill="url(#chk)"/><rect x="935.0" y="410.0" width="13" height="3" fill="#8a88aa"/><circle cx="746" cy="189" r="4.5" fill="#141414" stroke="#8a8a8a" stroke-width="0.8"/><circle cx="746" cy="189" r="2.7" fill="#e8e8e8"/><path d="M744.7 187.7h1.3v1.3h-1.3zM746 189h1.3v1.3h-1.3z" fill="#141414"/><circle cx="757.7" cy="189" r="4.5" fill="#141414" stroke="#8a8a8a" stroke-width="0.8"/><circle cx="757.7" cy="189" r="2.7" fill="#e8e8e8"/><path d="M756.4000000000001 187.7h1.3v1.3h-1.3zM757.7 189h1.3v1.3h-1.3z" fill="#141414"/><circle cx="636" cy="436.6" r="4.5" fill="#141414" stroke="#8a8a8a" stroke-width="0.8"/><circle cx="636" cy="436.6" r="2.7" fill="#e8e8e8"/><path d="M634.7 435.3h1.3v1.3h-1.3zM636 436.6h1.3v1.3h-1.3z" fill="#141414"/><circle cx="806" cy="409" r="4.5" fill="#141414" stroke="#8a8a8a" stroke-width="0.8"/><circle cx="806" cy="409" r="2.7" fill="#e8e8e8"/><path d="M804.7 407.7h1.3v1.3h-1.3zM806 409h1.3v1.3h-1.3z" fill="#141414"/><circle cx="897.9" cy="381.8" r="4.5" fill="#141414" stroke="#8a8a8a" stroke-width="0.8"/><circle cx="897.9" cy="381.8" r="2.7" fill="#e8e8e8"/><path d="M896.6 380.5h1.3v1.3h-1.3zM897.9 381.8h1.3v1.3h-1.3z" fill="#141414"/><circle cx="934" cy="409" r="4.5" fill="#141414" stroke="#8a8a8a" stroke-width="0.8"/><circle cx="934" cy="409" r="2.7" fill="#e8e8e8"/><path d="M932.7 407.7h1.3v1.3h-1.3zM934 409h1.3v1.3h-1.3z" fill="#141414"/></svg>
<div style="position:absolute;left:967.2px;top:42.5px;width:1.8px;height:498px;background:#1e1e1e;"></div>
<div style="position:absolute;left:969px;top:42.5px;width:55px;height:13.5px;background:#2a2a2a;"></div>
<div style="position:absolute;left:969px;top:56px;width:55px;height:484.5px;background:#333333;"></div>
<div style="position:absolute;left:1018.6px;top:56px;width:5.4px;height:484.5px;background:#2e2e2e;"></div>
<div style="position:absolute;left:1019.5px;top:56px;width:1.2px;height:484.5px;background:#262626;"></div>
<div style="position:absolute;left:969px;top:535.7px;width:49.6px;height:4.8px;background:#262626;"></div>
<div style="position:absolute;left:969px;top:535.7px;width:16px;height:4.8px;background:#3c3c3c;"></div>
<svg style="left:969px;top:42.5px" width="55" height="14">
<path d="M5 3h4l2 2v6.5h-6z" fill="#ddd"/><path d="M6 6h4M6 8h4M6 10h4" stroke="#555" stroke-width="0.6"/>
<g transform="translate(22.5 6.8) rotate(45)" fill="#d8d8d8"><rect x="-1.6" y="-4.2" width="3.2" height="3.6"/><rect x="-3" y="-0.8" width="6" height="1.4"/><rect x="-0.4" y="0.5" width="0.8" height="4.2" fill="#aaa"/></g>
<rect x="32" y="4" width="6" height="6" fill="none" stroke="#ccc" stroke-width="1"/><rect x="32" y="7" width="3" height="3" fill="#ccc"/>
<path d="M45.5 4l5.5 5.5M51 4l-5.5 5.5" stroke="#ccc" stroke-width="1"/>
</svg>
<div style="position:absolute;left:968.4px;top:56.3px;width:50.2px;height:12.5px;background:#3c3c3c;"></div>
<svg style="left:972px;top:60.3px" width="7" height="5"><path d="M0.5 0.8l2.7 2.7l2.7-2.7" stroke="#aaa" stroke-width="0.8" fill="none"/></svg>
<div style="position:absolute;left:983.5px;top:59.5px;font-family:'Liberation Mono', monospace;font-size:6px;line-height:1;color:#f0f0f0;white-space:nowrap;font-weight:bold;overflow:hidden;width:35px">ATTRIBUTES</div>
<div style="position:absolute;left:978px;top:74px;font-family:'Liberation Mono', monospace;font-size:8.2px;line-height:1;color:#d8d8d8;white-space:nowrap;overflow:hidden;width:40px">Identifier</div>
<div style="position:absolute;left:978px;top:82px;width:40.6px;height:8.5px;background:#262626;overflow:hidden"></div>
<div style="position:absolute;left:980.5px;top:83.5px;font-family:'Liberation Mono', monospace;font-size:7px;line-height:1;color:#c8c8c8;white-space:nowrap;overflow:hidden;width:38px">mso</div>
<div style="position:absolute;left:978px;top:99.5px;font-family:'Liberation Mono', monospace;font-size:8.2px;line-height:1;color:#d8d8d8;white-space:nowrap;overflow:hidden;width:40px">Description</div>
<div style="position:absolute;left:978px;top:109px;width:40.6px;height:51.6px;background:#262626;"></div>
<div style="position:absolute;left:978px;top:168.5px;font-family:'Liberation Mono', monospace;font-size:8.2px;line-height:1;color:#d8d8d8;white-space:nowrap;overflow:hidden;width:40px">Label</div>
<div style="position:absolute;left:978px;top:179px;width:40.6px;height:7.5px;background:#262626;overflow:hidden"></div>
<div style="position:absolute;left:978px;top:195px;font-family:'Liberation Mono', monospace;font-size:8.2px;line-height:1;color:#d8d8d8;white-space:nowrap;overflow:hidden;width:40px">User Data</div>
<div style="position:absolute;left:978px;top:205px;width:40.6px;height:8px;background:#262626;overflow:hidden"></div>
<div style="position:absolute;left:978px;top:221.5px;font-family:'Liberation Mono', monospace;font-size:8.2px;line-height:1;color:#d8d8d8;white-space:nowrap;overflow:hidden;width:40px">Group</div>
<div style="position:absolute;left:978px;top:231px;width:40.6px;height:7.6px;background:#262626;overflow:hidden"></div>
<div style="position:absolute;left:968.4px;top:244.4px;width:50.2px;height:12.5px;background:#3c3c3c;"></div>
<svg style="left:972px;top:248.4px" width="7" height="5"><path d="M0.5 0.8l2.7 2.7l2.7-2.7" stroke="#aaa" stroke-width="0.8" fill="none"/></svg>
<div style="position:absolute;left:983.5px;top:247.6px;font-family:'Liberation Mono', monospace;font-size:6px;line-height:1;color:#f0f0f0;white-space:nowrap;font-weight:bold;overflow:hidden;width:35px">INTEGRATION</div>
<div style="position:absolute;left:978px;top:260.5px;font-family:'Liberation Mono', monospace;font-size:8.2px;line-height:1;color:#d8d8d8;white-space:nowrap;overflow:hidden;width:40px">Format</div>
<div style="position:absolute;left:978px;top:270.3px;width:40.6px;height:9.3px;background:#262626;border:1px solid #4a4a4a;overflow:hidden"></div>
<div style="position:absolute;left:980.5px;top:271.8px;font-family:'Liberation Mono', monospace;font-size:7px;line-height:1;color:#c8c8c8;white-space:nowrap;overflow:hidden;width:38px">Default F</div>
<div style="position:absolute;left:978px;top:288px;font-family:'Liberation Mono', monospace;font-size:8.2px;line-height:1;color:#d8d8d8;white-space:nowrap;overflow:hidden;width:40px">Mipmaps</div>
<div style="position:absolute;left:978px;top:297px;width:40.6px;height:9.5px;background:#262626;border:1px solid #4a4a4a;overflow:hidden"></div>
<div style="position:absolute;left:980.5px;top:298.5px;font-family:'Liberation Mono', monospace;font-size:7px;line-height:1;color:#c8c8c8;white-space:nowrap;overflow:hidden;width:38px">Full pyra</div>
<div style="position:absolute;left:978px;top:315px;font-family:'Liberation Mono', monospace;font-size:8.2px;line-height:1;color:#d8d8d8;white-space:nowrap;overflow:hidden;width:40px">Usage</div>
<div style="position:absolute;left:984px;top:332.3px;font-family:'Liberation Mono', monospace;font-size:7.5px;line-height:1;color:#b8b8b8;white-space:nowrap;">Usage</div>
<div style="position:absolute;left:975px;top:341px;width:5.6px;height:12px;background:#262626;"></div>
<div style="position:absolute;left:983px;top:343px;width:36px;height:9.5px;background:#262626;border:1px solid #3e3e3e;border-radius:2px"></div>
<div style="position:absolute;left:988px;top:344.5px;width:8.5px;height:6.5px;background:linear-gradient(90deg,#e04040,#40c040 50%,#4060e0)"></div>
<div style="position:absolute;left:1001.5px;top:344.5px;font-family:'Liberation Mono', monospace;font-size:7px;line-height:1;color:#c8c8c8;white-space:nowrap;">RGB</div>
<div style="position:absolute;left:968.4px;top:375.7px;width:50.2px;height:12.5px;background:#3c3c3c;"></div>
<svg style="left:972px;top:379.7px" width="7" height="5"><path d="M0.5 0.8l2.7 2.7l2.7-2.7" stroke="#aaa" stroke-width="0.8" fill="none"/></svg>
<div style="position:absolute;left:983.5px;top:378.9px;font-family:'Liberation Mono', monospace;font-size:6px;line-height:1;color:#f0f0f0;white-space:nowrap;font-weight:bold;overflow:hidden;width:35px">CONDITIONS</div>
<div style="position:absolute;left:978px;top:392px;font-family:'Liberation Mono', monospace;font-size:8.2px;line-height:1;color:#d8d8d8;white-space:nowrap;overflow:hidden;width:40px">Visible I</div>
<div style="position:absolute;left:978px;top:401.7px;width:40.6px;height:7.5px;background:#262626;overflow:hidden"></div>
</body></html>
